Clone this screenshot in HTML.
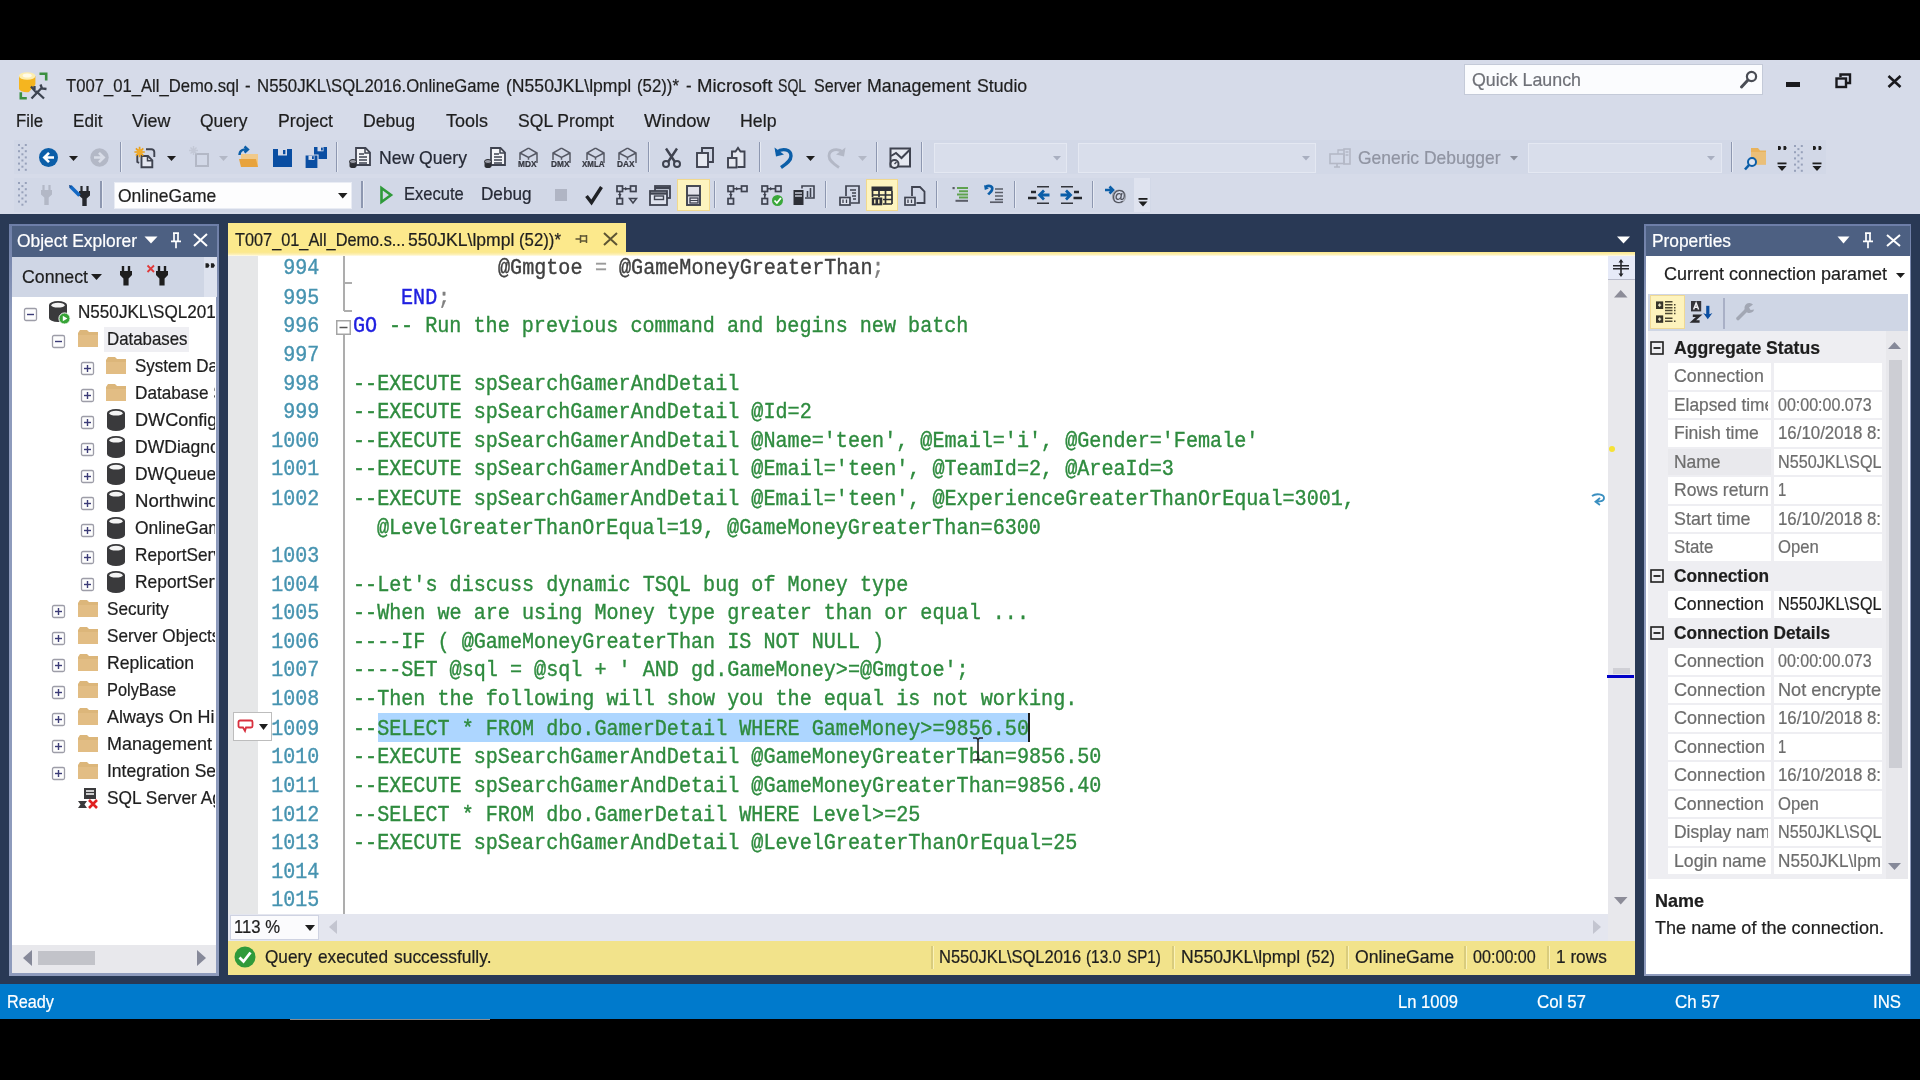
<!DOCTYPE html>
<html lang="en"><head><meta charset="utf-8"><title>SSMS - T007_01_All_Demo.sql</title>
<style>
html,body{margin:0;padding:0;background:#000;}
body{width:1920px;height:1080px;overflow:hidden;font-family:"Liberation Sans",sans-serif;}
#root{position:relative;width:1920px;height:1080px;overflow:hidden;background:#000;}
#root div,#root span.t,#root svg{position:absolute;}
span.t{white-space:pre;line-height:1;transform-origin:0 0;-webkit-text-stroke:0.22px currentColor;}
#root{filter:blur(0.45px);}
svg{overflow:visible;}
</style></head>
<body>
<div id="root">
<div style="left:0px;top:60px;width:1920px;height:154px;background:#d6dbe9;"></div>
<div style="left:0px;top:214px;width:1920px;height:770px;background:#293955;"></div>
<div style="left:0px;top:984px;width:1920px;height:35px;background:#007acc;"></div>
<svg style="left:18.5px;top:71.5px;" width="29" height="28" viewBox="0 0 29 28">
<path d="M0 4 v12.500 a8.200 3.800 0 0 0 16.400 0 v-12.500z" fill="#f5b51f"/>
<ellipse cx="8.200" cy="4" rx="8.200" ry="3.800" fill="#fdeeb0"/><ellipse cx="8.200" cy="3.600" rx="4.500" ry="2" fill="#fffbe9"/>
<path d="M9.500 20.500 L17 12 v9z" fill="#d6dbe9"/>
<path d="M20.500 1.800 h6.700 v6.700" fill="none" stroke="#3b8f40" stroke-width="2.6"/>
<path d="M1.800 20.300 v6 h6" fill="none" stroke="#3b8f40" stroke-width="2.6"/>
<path d="M12.500 26.500 l11 -11.500 M21.500 12.500 l1.500 4 l4.500 0.500 M12 14.500 l3.500 4 l0 -4.500 M17 19 l8 7.500" fill="none" stroke="#3c4350" stroke-width="2.3"/>
</svg>
<span class="t" style="left:66.4px;top:77.34px;font-size:18.5px;color:#1e1e1e;transform:scale(0.8991,1);">T007_01_All_Demo.sql</span>
<span class="t" style="left:245.2px;top:77.34px;font-size:18.5px;color:#1e1e1e;transform:scale(0.9073,1);">-</span>
<span class="t" style="left:256.7px;top:77.34px;font-size:18.5px;color:#1e1e1e;transform:scale(0.9083,1);">N550JKL\</span>
<span class="t" style="left:331.4px;top:77.34px;font-size:18.5px;color:#1e1e1e;transform:scale(0.9018,1);">SQL2016.OnlineGame</span>
<span class="t" style="left:505.8px;top:77.34px;font-size:18.5px;color:#1e1e1e;transform:scale(0.9512,1);">(N550JKL\lpmpl</span>
<span class="t" style="left:637.2px;top:77.34px;font-size:18.5px;color:#1e1e1e;transform:scale(0.9078,1);">(52))*</span>
<span class="t" style="left:685.8px;top:77.34px;font-size:18.5px;color:#1e1e1e;transform:scale(0.9073,1);">-</span>
<span class="t" style="left:696.8px;top:77.34px;font-size:18.5px;color:#1e1e1e;transform:scale(1.0047,1);">Microsoft</span>
<span class="t" style="left:778.4px;top:77.34px;font-size:18.5px;color:#1e1e1e;transform:scale(0.7615,1);">SQL</span>
<span class="t" style="left:813.6px;top:77.34px;font-size:18.5px;color:#1e1e1e;transform:scale(0.8697,1);">Server</span>
<span class="t" style="left:866.6px;top:77.34px;font-size:18.5px;color:#1e1e1e;transform:scale(0.9613,1);">Management</span>
<span class="t" style="left:976.8px;top:77.34px;font-size:18.5px;color:#1e1e1e;transform:scale(0.9568,1);">Studio</span>
<div style="left:1464px;top:64px;width:299px;height:31px;background:#fbfcfe;border:1px solid #c4cad8;box-sizing:border-box;"></div>
<span class="t" style="left:1472px;top:71.34px;font-size:18.5px;color:#6f7178;transform:scale(0.9635,1);">Quick Launch</span>
<svg style="left:1738px;top:69px;" width="22" height="22" viewBox="0 0 22 22"><circle cx="13.5" cy="7.5" r="4.6" fill="none" stroke="#4a4d55" stroke-width="2.2"/><path d="M10 11 L3.5 18" stroke="#4a4d55" stroke-width="3" stroke-linecap="round"/></svg>
<div style="left:1786px;top:82px;width:14px;height:5px;background:#1a1a1e;"></div>
<svg style="left:1835px;top:73px;" width="17" height="16" viewBox="0 0 17 16"><path d="M5.5 4 v-2.5 h9.5 v8.5 h-3" fill="none" stroke="#1a1a1e" stroke-width="2.4"/><rect x="1.5" y="5.5" width="9.5" height="8.5" fill="none" stroke="#1a1a1e" stroke-width="2.4"/></svg>
<svg style="left:1887px;top:75px;" width="15" height="13" viewBox="0 0 15 13"><path d="M1.5 1 L13.5 12 M13.5 1 L1.5 12" stroke="#1a1a1e" stroke-width="2.6" fill="none"/></svg>
<span class="t" style="left:15.5px;top:111.89px;font-size:18.2px;color:#1e1e1e;transform:scale(0.9211,1);">File</span>
<span class="t" style="left:72.5px;top:111.89px;font-size:18.2px;color:#1e1e1e;transform:scale(0.9412,1);">Edit</span>
<span class="t" style="left:131.5px;top:111.89px;font-size:18.2px;color:#1e1e1e;transform:scale(0.9848,1);">View</span>
<span class="t" style="left:199.5px;top:111.89px;font-size:18.2px;color:#1e1e1e;transform:scale(0.9590,1);">Query</span>
<span class="t" style="left:277.5px;top:111.89px;font-size:18.2px;color:#1e1e1e;transform:scale(0.9716,1);">Project</span>
<span class="t" style="left:363px;top:111.89px;font-size:18.2px;color:#1e1e1e;transform:scale(0.9700,1);">Debug</span>
<span class="t" style="left:445.5px;top:111.89px;font-size:18.2px;color:#1e1e1e;transform:scale(0.9890,1);">Tools</span>
<span class="t" style="left:517.5px;top:111.89px;font-size:18.2px;color:#1e1e1e;transform:scale(0.9657,1);">SQL Prompt</span>
<span class="t" style="left:643.5px;top:111.89px;font-size:18.2px;color:#1e1e1e;transform:scale(1.0203,1);">Window</span>
<span class="t" style="left:740px;top:111.89px;font-size:18.2px;color:#1e1e1e;transform:scale(0.9758,1);">Help</span>
<div style="left:14px;top:140px;width:1812px;height:34px;background:#d2d8e7;"></div>
<div style="left:14px;top:178px;width:1137px;height:34px;background:#d2d8e7;"></div>
<svg style="left:17.5px;top:143.8px;" width="9" height="25" viewBox="0 0 9 25"><g fill="#97a1ba"><rect x="0" y="0.0" width="2" height="2"/><rect x="6.8" y="0.0" width="2" height="2"/><rect x="3.4" y="3.1" width="2" height="2"/><rect x="0" y="6.2" width="2" height="2"/><rect x="6.8" y="6.2" width="2" height="2"/><rect x="3.4" y="9.3" width="2" height="2"/><rect x="0" y="12.4" width="2" height="2"/><rect x="6.8" y="12.4" width="2" height="2"/><rect x="3.4" y="15.5" width="2" height="2"/><rect x="0" y="18.6" width="2" height="2"/><rect x="6.8" y="18.6" width="2" height="2"/><rect x="3.4" y="21.7" width="2" height="2"/><rect x="0" y="24.8" width="2" height="2"/><rect x="6.8" y="24.8" width="2" height="2"/></g></svg>
<svg style="left:38.5px;top:148px;" width="19" height="19" viewBox="0 0 19 19"><circle cx="9.5" cy="9.5" r="9.5" fill="#0b5ea8"/><path d="M15 9.5 h-9 M10 4.8 l-4.7 4.7 l4.7 4.7" fill="none" stroke="#fff" stroke-width="2.6"/></svg>
<svg style="left:69.0px;top:155.5px;" width="9" height="5" viewBox="0 0 9 5"><path d="M0 0 h9 l-4.5 5z" fill="#1e1e1e"/></svg>
<svg style="left:89.5px;top:148px;" width="19" height="19" viewBox="0 0 19 19"><circle cx="9.5" cy="9.5" r="9.2" fill="#b3b8c6"/><path d="M4 9.5 h9 M9 4.8 l4.7 4.7 l-4.7 4.7" fill="none" stroke="#d9dde8" stroke-width="2.6"/></svg>
<div style="left:119.5px;top:142px;width:1.6px;height:30px;background:#8d97b0;"></div>
<div style="left:121.1px;top:142px;width:1.2px;height:30px;background:#e6eaf3;"></div>
<svg style="left:134px;top:146px;" width="21" height="22" viewBox="0 0 21 22"><path d="M12 3.200 h5.500 a2.800 2.800 0 0 1 2.800 2.800 v5" fill="none" stroke="#3f4350" stroke-width="1.9"/>
<path d="M7.500 10 h6.500 l4.300 4.300 v7 h-10.800 z" fill="#e4e7f0" stroke="#3f4350" stroke-width="1.9"/><path d="M13.500 10 v4.800 h4.800" fill="none" stroke="#3f4350" stroke-width="1.5"/>
<path d="M3.300 9 v7 l1.800 0.800" fill="none" stroke="#3f4350" stroke-width="1.9"/>
<g stroke="#e9a01c" stroke-width="1.7"><path d="M5.600 0.800 v10.400 M0.400 6 h10.400 M1.900 2.300 l7.400 7.400 M9.300 2.300 l-7.400 7.400"/></g><circle cx="5.600" cy="6" r="3" fill="#f0ab2c"/></svg>
<svg style="left:166.5px;top:155.5px;" width="9" height="5" viewBox="0 0 9 5"><path d="M0 0 h9 l-4.5 5z" fill="#1e1e1e"/></svg>
<svg style="left:189px;top:146px;" width="20" height="22" viewBox="0 0 20 22"><path d="M7 8 h12 v12 h-12 z" fill="none" stroke="#b3b8c6" stroke-width="2"/><path d="M4.5 0 v9 M0 4.5 h9 M1.5 1.5 l6 6 M7.500 1.5 l-6 6" stroke="#c3c8d6" stroke-width="1.4"/></svg>
<svg style="left:218.5px;top:155.5px;" width="9" height="5" viewBox="0 0 9 5"><path d="M0 0 h9 l-4.5 5z" fill="#b3b8c6"/></svg>
<svg style="left:237px;top:146px;" width="23" height="22" viewBox="0 0 23 22"><path d="M4 8 h17 v13 h-17z" fill="#f0c98a"/><path d="M2 13 h17 l2 8 h-17z" fill="#e8a33d"/>
<path d="M2.5 9 c0 -5 4 -6 8 -5.5 M7.5 0.5 l3.400 3 l-3.400 3" fill="none" stroke="#0b5ea8" stroke-width="2.4"/></svg>
<svg style="left:272.5px;top:148.5px;" width="19" height="18" viewBox="0 0 19 18"><path d="M0 0 h19 v18 h-19z" fill="#0a4ea2"/><rect x="5" y="0" width="9" height="6.5" fill="#d6dbe9"/><rect x="10" y="1" width="2.4" height="4.2" fill="#0a4ea2"/></svg>
<svg style="left:304.5px;top:146.5px;" width="22" height="22" viewBox="0 0 22 22"><path d="M9 0 h13 v12 h-13z" fill="#0a4ea2"/><rect x="12.5" y="0" width="6" height="4.3" fill="#d6dbe9"/><rect x="16" y="0.6" width="1.8" height="2.8" fill="#0a4ea2"/><path d="M0 8 h13 v13.500 h-13z" fill="#0a4ea2" stroke="#d2d8e7" stroke-width="1.2"/><rect x="3.5" y="8.600" width="6" height="4.3" fill="#d6dbe9"/><rect x="7" y="9.2" width="1.8" height="2.8" fill="#0a4ea2"/></svg>
<div style="left:335.5px;top:142px;width:1.6px;height:30px;background:#8d97b0;"></div>
<div style="left:337.1px;top:142px;width:1.2px;height:30px;background:#e6eaf3;"></div>
<svg style="left:349px;top:146.5px;" width="22" height="22" viewBox="0 0 22 22"><path d="M7 1 h9.500 l4.500 4.500 v12.500 h-14z" fill="#f3f4f8" stroke="#3f4350" stroke-width="1.8"/><path d="M16 1 v5 h5" fill="none" stroke="#3f4350" stroke-width="1.5"/>
<path d="M10 7 h5 M10 10 h8 M10 13 h8 M10 16 h8" stroke="#3f4350" stroke-width="1.5"/>
<path d="M0.5 14.500 v4.500 a3.500 2 0 0 0 7 0 v-4.500z" fill="#2b2d33"/><ellipse cx="4" cy="14.500" rx="3.500" ry="2" fill="#9a9ca6" stroke="#2b2d33" stroke-width="1"/></svg>
<span class="t" style="left:378.8px;top:149.29px;font-size:18.2px;color:#262a36;transform:scale(0.9674,1);">New Query</span>
<svg style="left:484px;top:146.5px;" width="22" height="22" viewBox="0 0 22 22"><path d="M7 1 h9.500 l4.500 4.500 v12.500 h-14z" fill="#f3f4f8" stroke="#3f4350" stroke-width="1.8"/><path d="M16 1 v5 h5" fill="none" stroke="#3f4350" stroke-width="1.5"/>
<path d="M10 7 h5 M10 10 h8 M10 13 h8 M10 16 h8" stroke="#3f4350" stroke-width="1.5"/>
<path d="M0.5 14.500 v4.500 a3.500 2 0 0 0 7 0 v-4.500z" fill="#2b2d33"/><ellipse cx="4" cy="14.500" rx="3.500" ry="2" fill="#9a9ca6" stroke="#2b2d33" stroke-width="1"/></svg>
<svg style="left:517px;top:146.5px;" width="22" height="22" viewBox="0 0 22 22"><path d="M11.500 1.200 l8.500 4.800 v10 M11.500 1.200 l-8.500 4.800 v7 M3 6 l8.500 4.500 l8.500 -4.500 M11.500 10.500 v2.200" fill="none" stroke="#555864" stroke-width="1.5"/></svg>
<span class="t" style="left:517.75px;top:160.45px;font-size:8.8px;color:#34363f;font-weight:bold;transform:scale(0.9457,1);">MDX</span>
<svg style="left:550px;top:146.5px;" width="22" height="22" viewBox="0 0 22 22"><path d="M11.500 1.200 l8.500 4.800 v10 M11.500 1.200 l-8.500 4.800 v7 M3 6 l8.500 4.500 l8.500 -4.500 M11.500 10.500 v2.200" fill="none" stroke="#555864" stroke-width="1.5"/></svg>
<span class="t" style="left:550.75px;top:160.45px;font-size:8.8px;color:#34363f;font-weight:bold;transform:scale(0.9457,1);">DMX</span>
<svg style="left:583.5px;top:146.5px;" width="22" height="22" viewBox="0 0 22 22"><path d="M11.500 1.200 l8.500 4.800 v10 M11.500 1.200 l-8.500 4.800 v7 M3 6 l8.500 4.500 l8.500 -4.500 M11.500 10.500 v2.200" fill="none" stroke="#555864" stroke-width="1.5"/></svg>
<span class="t" style="left:582.25px;top:160.45px;font-size:8.8px;color:#34363f;font-weight:bold;transform:scale(0.9028,1);">XMLA</span>
<svg style="left:616px;top:146.5px;" width="22" height="22" viewBox="0 0 22 22"><path d="M11.500 1.200 l8.500 4.800 v10 M11.500 1.200 l-8.500 4.800 v7 M3 6 l8.500 4.500 l8.500 -4.500 M11.500 10.500 v2.200" fill="none" stroke="#555864" stroke-width="1.5"/></svg>
<span class="t" style="left:617.25px;top:160.45px;font-size:8.8px;color:#34363f;font-weight:bold;transform:scale(0.9420,1);">DAX</span>
<div style="left:647.5px;top:142px;width:1.6px;height:30px;background:#8d97b0;"></div>
<div style="left:649.1px;top:142px;width:1.2px;height:30px;background:#e6eaf3;"></div>
<svg style="left:662px;top:148px;" width="19" height="20" viewBox="0 0 19 20"><path d="M4 0.5 L13 14 M15 0.5 L6 14" fill="none" stroke="#3f4350" stroke-width="2.4"/><circle cx="4" cy="16" r="3" fill="none" stroke="#3f4350" stroke-width="2"/><circle cx="15" cy="16" r="3" fill="none" stroke="#3f4350" stroke-width="2"/></svg>
<svg style="left:696px;top:147px;" width="18" height="21" viewBox="0 0 18 21"><path d="M6 5 v-4 h11 v14 h-4" fill="none" stroke="#3f4350" stroke-width="1.9"/><rect x="1" y="6" width="11" height="14" fill="#e6e9f1" stroke="#3f4350" stroke-width="1.9"/></svg>
<svg style="left:727px;top:146.5px;" width="19" height="21" viewBox="0 0 19 21"><path d="M5 10 v-5.500 h3.500 l2.500 -3.500 l2.500 3.500 h4 v15.500 h-7" fill="#e6e9f1" stroke="#3f4350" stroke-width="1.9"/><rect x="1" y="11" width="8.500" height="9.500" fill="#e6e9f1" stroke="#3f4350" stroke-width="1.9"/></svg>
<div style="left:758.6px;top:142px;width:1.6px;height:30px;background:#8d97b0;"></div>
<div style="left:760.2px;top:142px;width:1.2px;height:30px;background:#e6eaf3;"></div>
<svg style="left:774px;top:146.5px;" width="19" height="21" viewBox="0 0 19 21"><path d="M2.500 5.500 c6 -5 14.500 -3 14.500 3.500 c0 5 -5 8 -10 11.500" fill="none" stroke="#0b5ea8" stroke-width="3.4"/><path d="M0.5 0.5 l1.500 9 l8 -2z" fill="#0b5ea8"/></svg>
<svg style="left:805.5px;top:155.5px;" width="9" height="5" viewBox="0 0 9 5"><path d="M0 0 h9 l-4.5 5z" fill="#1e1e1e"/></svg>
<svg style="left:827px;top:146.5px;" width="19" height="21" viewBox="0 0 19 21"><path d="M16.500 5.500 c-6 -5 -14.500 -3 -14.500 3.500 c0 5 5 8 10 11.500" fill="none" stroke="#b3b8c6" stroke-width="2.8"/><path d="M18.500 0.5 l-1.500 9 l-8 -2z" fill="#b3b8c6"/></svg>
<svg style="left:858.0px;top:155.5px;" width="9" height="5" viewBox="0 0 9 5"><path d="M0 0 h9 l-4.5 5z" fill="#b3b8c6"/></svg>
<div style="left:875.5px;top:142px;width:1.6px;height:30px;background:#8d97b0;"></div>
<div style="left:877.1px;top:142px;width:1.2px;height:30px;background:#e6eaf3;"></div>
<svg style="left:889px;top:146.5px;" width="22" height="22" viewBox="0 0 22 22"><rect x="1.500" y="1.500" width="19.500" height="18" fill="#e6e9f1" stroke="#3f4350" stroke-width="2"/><path d="M2 9 l5 -3 l5.500 5 l8.500 -8.500" fill="none" stroke="#3f4350" stroke-width="2"/><circle cx="5.500" cy="17" r="4" fill="#e6e9f1" stroke="#3f4350" stroke-width="2"/><path d="M5.500 17 l2 -2" stroke="#3f4350" stroke-width="1.4"/></svg>
<div style="left:920.6px;top:142px;width:1.6px;height:30px;background:#8d97b0;"></div>
<div style="left:922.2px;top:142px;width:1.2px;height:30px;background:#e6eaf3;"></div>
<div style="left:934px;top:142.5px;width:133px;height:30.5px;background:#d9deeb;border:1px solid #e4e8f2;box-sizing:border-box;"></div>
<svg style="left:1052.5px;top:155.75px;" width="8" height="4.5" viewBox="0 0 8 4.5"><path d="M0 0 h8 l-4.0 4.5z" fill="#a9afc0"/></svg>
<div style="left:1078px;top:142.5px;width:238px;height:30.5px;background:#d9deeb;border:1px solid #e4e8f2;box-sizing:border-box;"></div>
<svg style="left:1301.5px;top:155.75px;" width="8" height="4.5" viewBox="0 0 8 4.5"><path d="M0 0 h8 l-4.0 4.5z" fill="#a9afc0"/></svg>
<svg style="left:1329px;top:147.5px;" width="22" height="20" viewBox="0 0 22 20"><rect x="1" y="6" width="14" height="9.500" fill="none" stroke="#b4b8c6" stroke-width="1.6"/><path d="M5 19 h6 M8 15.500 v3.500" stroke="#b4b8c6" stroke-width="1.6"/><rect x="15" y="1" width="6" height="15" fill="none" stroke="#b4b8c6" stroke-width="1.6"/><path d="M9 6 v-4 h6 M16.500 4 h3 M16.500 7 h3" fill="none" stroke="#b4b8c6" stroke-width="1.3"/></svg>
<span class="t" style="left:1357.5px;top:148.59px;font-size:18.2px;color:#9094a2;transform:scale(0.9588,1);">Generic Debugger</span>
<svg style="left:1509.5px;top:155.75px;" width="8" height="4.5" viewBox="0 0 8 4.5"><path d="M0 0 h8 l-4.0 4.5z" fill="#8b909d"/></svg>
<div style="left:1528px;top:142.5px;width:193.5px;height:30.5px;background:#d9deeb;border:1px solid #e4e8f2;box-sizing:border-box;"></div>
<svg style="left:1707.0px;top:155.75px;" width="8" height="4.5" viewBox="0 0 8 4.5"><path d="M0 0 h8 l-4.0 4.5z" fill="#a9afc0"/></svg>
<div style="left:1730.5px;top:142px;width:1.6px;height:30px;background:#8d97b0;"></div>
<div style="left:1732.1px;top:142px;width:1.2px;height:30px;background:#e6eaf3;"></div>
<svg style="left:1744px;top:147px;" width="23" height="23" viewBox="0 0 23 23"><path d="M7 1 h7 l2 2.500 h6 v14 h-15z" fill="#e9b35c"/><path d="M7 5 h15 v12.500 h-15z" fill="#eabf78"/><circle cx="8" cy="15" r="4" fill="#dfe6f2" stroke="#0b5ea8" stroke-width="2"/><path d="M5 18 l-4 4.500" stroke="#0b5ea8" stroke-width="2.6"/></svg>
<svg style="left:1776.5px;top:145px;" width="10" height="27" viewBox="0 0 10 27"><path d="M1 1 h2.200 l1 2 l-1 2 h-2.200z M6.500 1 h2.200 l1 2 l-1 2 h-2.200z" fill="#1e1e1e"/><rect x="0.5" y="17.500" width="9" height="1.800" fill="#1e1e1e"/><path d="M0.5 21 h9 l-4.500 5z" fill="#1e1e1e"/></svg>
<svg style="left:1793.8px;top:144.5px;" width="9" height="25" viewBox="0 0 9 25"><g fill="#97a1ba"><rect x="0" y="0.0" width="2" height="2"/><rect x="6.8" y="0.0" width="2" height="2"/><rect x="3.4" y="3.1" width="2" height="2"/><rect x="0" y="6.2" width="2" height="2"/><rect x="6.8" y="6.2" width="2" height="2"/><rect x="3.4" y="9.3" width="2" height="2"/><rect x="0" y="12.4" width="2" height="2"/><rect x="6.8" y="12.4" width="2" height="2"/><rect x="3.4" y="15.5" width="2" height="2"/><rect x="0" y="18.6" width="2" height="2"/><rect x="6.8" y="18.6" width="2" height="2"/><rect x="3.4" y="21.7" width="2" height="2"/><rect x="0" y="24.8" width="2" height="2"/><rect x="6.8" y="24.8" width="2" height="2"/></g></svg>
<svg style="left:1811.5px;top:145px;" width="10" height="27" viewBox="0 0 10 27"><path d="M1 1 h2.200 l1 2 l-1 2 h-2.200z M6.500 1 h2.200 l1 2 l-1 2 h-2.200z" fill="#1e1e1e"/><rect x="0.5" y="17.500" width="9" height="1.800" fill="#1e1e1e"/><path d="M0.5 21 h9 l-4.500 5z" fill="#1e1e1e"/></svg>
<svg style="left:17.5px;top:182.2px;" width="9" height="22" viewBox="0 0 9 22"><g fill="#97a1ba"><rect x="0" y="0.0" width="2" height="2"/><rect x="6.8" y="0.0" width="2" height="2"/><rect x="3.4" y="3.1" width="2" height="2"/><rect x="0" y="6.2" width="2" height="2"/><rect x="6.8" y="6.2" width="2" height="2"/><rect x="3.4" y="9.3" width="2" height="2"/><rect x="0" y="12.4" width="2" height="2"/><rect x="6.8" y="12.4" width="2" height="2"/><rect x="3.4" y="15.5" width="2" height="2"/><rect x="0" y="18.6" width="2" height="2"/><rect x="6.8" y="18.6" width="2" height="2"/><rect x="3.4" y="21.7" width="2" height="2"/></g></svg>
<svg style="left:41px;top:185px;" width="11" height="20" viewBox="0 0 11 20"><path d="M2.500 0 v5 M8.500 0 v5" stroke="#b3b8c6" stroke-width="2.2" fill="none"/><path d="M0 5 h11 v4.500 l-3.300 3 v7.500 h-4.400 v-7.500 l-3.300 -3z" fill="#b3b8c6"/></svg>
<svg style="left:79px;top:185.5px;" width="11" height="20" viewBox="0 0 11 20"><path d="M2.500 0 v5 M8.500 0 v5" stroke="#26282e" stroke-width="2.2" fill="none"/><path d="M0 5 h11 v4.500 l-3.300 3 v7.500 h-4.400 v-7.500 l-3.300 -3z" fill="#26282e"/></svg>
<svg style="left:68.5px;top:184.5px;" width="12" height="12" viewBox="0 0 12 12"><path d="M1.500 1.500 L10.500 10.500" stroke="#1368c4" stroke-width="3.6"/><path d="M0 0 l3 0.7 l-2.300 2.300z" fill="#0a3f86"/></svg>
<div style="left:100px;top:181px;width:1.6px;height:27px;background:#8d97b0;"></div>
<div style="left:101.6px;top:181px;width:1.2px;height:27px;background:#e6eaf3;"></div>
<div style="left:113.5px;top:181.5px;width:238px;height:27.5px;background:#fdfdfe;border:1px solid #e9ecf4;box-sizing:border-box;"></div>
<span class="t" style="left:117.8px;top:186.79px;font-size:18.2px;color:#1e1e1e;transform:scale(0.9617,1);">OnlineGame</span>
<svg style="left:337.55px;top:193.25px;" width="9.5" height="5.5" viewBox="0 0 9.5 5.5"><path d="M0 0 h9.5 l-4.75 5.5z" fill="#1e1e1e"/></svg>
<div style="left:361px;top:181px;width:1.6px;height:27px;background:#8d97b0;"></div>
<div style="left:362.6px;top:181px;width:1.2px;height:27px;background:#e6eaf3;"></div>
<svg style="left:379.5px;top:186px;" width="12" height="18" viewBox="0 0 12 18"><path d="M1.500 2 v14 l9.500 -7z" fill="none" stroke="#2f9a3a" stroke-width="2.6" stroke-linejoin="miter"/></svg>
<span class="t" style="left:404.2px;top:185.39px;font-size:18.2px;color:#262a36;transform:scale(0.9099,1);">Execute</span>
<span class="t" style="left:481px;top:185.39px;font-size:18.2px;color:#262a36;transform:scale(0.9420,1);">Debug</span>
<div style="left:555px;top:189px;width:12px;height:11.5px;background:#b0b5c4;"></div>
<svg style="left:585px;top:186px;" width="18" height="18" viewBox="0 0 18 18"><path d="M1.500 10 l5 6.500 l10 -15.500" fill="none" stroke="#202226" stroke-width="3.4"/></svg>
<svg style="left:616px;top:185px;" width="22" height="20" viewBox="0 0 22 20"><rect x="1" y="1" width="5.500" height="5.500" fill="none" stroke="#3f4350" stroke-width="1.7"/><rect x="14.500" y="1" width="5.500" height="5.500" fill="none" stroke="#3f4350" stroke-width="1.7"/><rect x="1" y="13.500" width="5.500" height="5.500" fill="none" stroke="#3f4350" stroke-width="1.7"/><path d="M7 3.800 h7 M3.800 7 v6" stroke="#3f4350" stroke-width="1.5"/><path d="M9 2 l3 1.800 l-3 1.800z M2 9 l1.800 3 l1.800 -3z" fill="#3f4350"/><path d="M13.500 13.500 h7 l-3.500 4.500z" fill="none" stroke="#3f4350" stroke-width="1.5"/></svg>
<svg style="left:649px;top:185px;" width="22" height="21" viewBox="0 0 22 21"><rect x="6" y="1" width="15" height="12" fill="none" stroke="#3f4350" stroke-width="1.8"/><path d="M6 3 h15" stroke="#3f4350" stroke-width="2.400"/><rect x="1" y="6" width="17" height="14" fill="#dfe3ee" stroke="#3f4350" stroke-width="1.8"/><path d="M1 8.500 h17" stroke="#3f4350" stroke-width="2.400"/><rect x="5.500" y="11" width="9" height="3.500" fill="none" stroke="#3f4350" stroke-width="1.4"/></svg>
<div style="left:677px;top:178.5px;width:32.5px;height:32.5px;background:#fdf4bf;border:1.5px solid #f1d98e;box-sizing:border-box;"></div>
<svg style="left:686px;top:185px;" width="15" height="21" viewBox="0 0 15 21"><rect x="1" y="1" width="13" height="19" fill="#e3e3ea" stroke="#3f4350" stroke-width="1.9"/><path d="M1 10.500 h13" stroke="#3f4350" stroke-width="1.8"/><rect x="4" y="13" width="8" height="5" fill="none" stroke="#3f4350" stroke-width="1.3"/><path d="M4 15.500 h8" stroke="#3f4350" stroke-width="1"/></svg>
<div style="left:713.6px;top:181px;width:1.6px;height:27px;background:#8d97b0;"></div>
<div style="left:715.2px;top:181px;width:1.2px;height:27px;background:#e6eaf3;"></div>
<svg style="left:727.2px;top:185px;" width="22" height="20" viewBox="0 0 22 20"><rect x="1" y="1" width="5.500" height="5.500" fill="none" stroke="#3f4350" stroke-width="1.7"/><rect x="14.500" y="1" width="5.500" height="5.500" fill="none" stroke="#3f4350" stroke-width="1.7"/><rect x="1" y="13.500" width="5.500" height="5.500" fill="none" stroke="#3f4350" stroke-width="1.7"/><path d="M7 3.800 h7 M3.800 7 v6" stroke="#3f4350" stroke-width="1.5"/><path d="M9 2 l3 1.800 l-3 1.800z M2 9 l1.800 3 l1.800 -3z" fill="#3f4350"/></svg>
<svg style="left:760.6px;top:185px;" width="22" height="20" viewBox="0 0 22 20"><rect x="1" y="1" width="5.500" height="5.500" fill="none" stroke="#3f4350" stroke-width="1.7"/><rect x="14.500" y="1" width="5.500" height="5.500" fill="none" stroke="#3f4350" stroke-width="1.7"/><rect x="1" y="13.500" width="5.500" height="5.500" fill="none" stroke="#3f4350" stroke-width="1.7"/><path d="M7 3.800 h7 M3.800 7 v6" stroke="#3f4350" stroke-width="1.5"/><path d="M9 2 l3 1.800 l-3 1.800z M2 9 l1.800 3 l1.800 -3z" fill="#3f4350"/><circle cx="16.500" cy="15.500" r="5.500" fill="#3aa83a"/><path d="M13.500 15.500 l2.400 2.500 l4 -5" fill="none" stroke="#fff" stroke-width="1.8"/></svg>
<svg style="left:793px;top:185px;" width="22" height="20" viewBox="0 0 22 20"><rect x="0.5" y="5" width="10" height="15" fill="#2d2f36"/><path d="M2 8 h7 M2 11 h7" stroke="#c8ccd8" stroke-width="1.3"/><path d="M9 3.500 v-2.500 h12 v12 h-9" fill="none" stroke="#3f4350" stroke-width="1.6"/><path d="M14.500 12 v-6 M17.500 12 v-9" stroke="#3f4350" stroke-width="1.6"/></svg>
<div style="left:824.6px;top:181px;width:1.6px;height:27px;background:#8d97b0;"></div>
<div style="left:826.2px;top:181px;width:1.2px;height:27px;background:#e6eaf3;"></div>
<svg style="left:838.5px;top:185px;" width="22" height="21" viewBox="0 0 22 21"><path d="M7 11 v-10 h13 v17 h-8" fill="none" stroke="#3f4350" stroke-width="1.7"/><path d="M11 5 h6 M13 8 h4 M13 11 h4 M14 14 h3" stroke="#3f4350" stroke-width="1.3"/><rect x="1" y="12.5" width="10" height="7.500" fill="#dfe3ee" stroke="#3f4350" stroke-width="1.7"/><path d="M4 14.5 v3.500 M7.5 14.5 v3.500" stroke="#3f4350" stroke-width="1.3"/></svg>
<div style="left:865.6px;top:178.5px;width:32.39999999999998px;height:32.5px;background:#fdf4bf;border:1.5px solid #f1d98e;box-sizing:border-box;"></div>
<svg style="left:871px;top:186px;" width="22" height="20" viewBox="0 0 22 20"><rect x="0.5" y="0.5" width="21" height="4.500" fill="#2d2f36"/><path d="M1.500 5 v6 M8 5 v6 M14.500 5 v13 M21 5 v13 M1 9 h20 M12 13.500 h9 M12 18 h9" fill="none" stroke="#2d2f36" stroke-width="1.7"/><rect x="0.8" y="11.500" width="10.500" height="7.800" fill="#2d2f36"/><path d="M3.800 13.500 v4 M7.800 13.500 v4" stroke="#fdf4bf" stroke-width="1.4"/></svg>
<svg style="left:904px;top:185px;" width="22" height="21" viewBox="0 0 22 21"><path d="M8 11 v-9 h8 l4.500 4.500 v11.500 h-8" fill="none" stroke="#3f4350" stroke-width="1.8"/><rect x="1" y="12.5" width="10" height="7.500" fill="#dfe3ee" stroke="#3f4350" stroke-width="1.7"/><path d="M4 14.5 v3.500 M7.5 14.5 v3.500" stroke="#3f4350" stroke-width="1.3"/></svg>
<div style="left:935.5px;top:181px;width:1.6px;height:27px;background:#8d97b0;"></div>
<div style="left:937.1px;top:181px;width:1.2px;height:27px;background:#e6eaf3;"></div>
<svg style="left:952px;top:186px;" width="16" height="16" viewBox="0 0 16 16"><rect x="0.5" y="1" width="2.200" height="2.200" fill="#5a5d68"/><path d="M5 2 h11 M7 5.200 h9 M5 8.400 h11 M7 11.600 h9" stroke="#5fa24f" stroke-width="2"/><path d="M3.500 14.800 h12.500" stroke="#5a5d68" stroke-width="2"/></svg>
<svg style="left:983.5px;top:185px;" width="19" height="18" viewBox="0 0 19 18"><path d="M1.200 2 c4.500 -2.500 8 -0.500 6.800 3 c-0.600 1.800 -2.500 3 -3.800 4.500" fill="none" stroke="#0b5ea8" stroke-width="2.6"/><path d="M0 0 l0.800 5 l4 -1.500z" fill="#0b5ea8"/><path d="M11 4 h8 M11 7.500 h8 M11 11 h8 M11 14.500 h8" stroke="#5a5d68" stroke-width="1.7"/><path d="M6 17.200 h13" stroke="#5a5d68" stroke-width="1.7"/></svg>
<div style="left:1013.6px;top:181px;width:1.6px;height:27px;background:#8d97b0;"></div>
<div style="left:1015.2px;top:181px;width:1.2px;height:27px;background:#e6eaf3;"></div>
<svg style="left:1027.5px;top:186px;" width="22" height="18" viewBox="0 0 22 18"><path d="M9 0.8 h12 M9 17.200 h12" stroke="#33353c" stroke-width="1.5"/><path d="M3 6 h5 M0 12 h8.500" stroke="#26282e" stroke-width="2.600"/><path d="M21.500 9 h-9 M16 4.500 l-4.500 4.500 l4.500 4.500" fill="none" stroke="#0b5ea8" stroke-width="2.800"/></svg>
<svg style="left:1060px;top:186px;" width="22" height="18" viewBox="0 0 22 18"><path d="M1 0.8 h12 M1 17.200 h12" stroke="#33353c" stroke-width="1.5"/><path d="M14 6 h5 M13.500 12 h8.500" stroke="#26282e" stroke-width="2.600"/><path d="M0.5 9 h9 M6 4.500 l4.500 4.500 l-4.500 4.500" fill="none" stroke="#0b5ea8" stroke-width="2.800"/></svg>
<div style="left:1091.5px;top:181px;width:1.6px;height:27px;background:#8d97b0;"></div>
<div style="left:1093.1px;top:181px;width:1.2px;height:27px;background:#e6eaf3;"></div>
<svg style="left:1105px;top:186px;" width="22" height="18" viewBox="0 0 22 18"><path d="M0 4 h7 M4.500 0.5 l3.500 3.500 l-3.500 3.500" fill="none" stroke="#0b5ea8" stroke-width="2.600"/><circle cx="14" cy="10.500" r="6.500" fill="none" stroke="#9b9ea8" stroke-width="1.2"/></svg>
<span class="t" style="left:1112px;top:187.80px;font-size:15px;color:#4a4d57;transform:scale(0.9190,1);">@</span>
<div style="left:1134px;top:178px;width:16px;height:34px;background:#dfe3ef;"></div>
<svg style="left:1138px;top:198px;" width="10" height="9" viewBox="0 0 10 9"><rect x="0.5" y="0" width="9" height="1.800" fill="#1e1e1e"/><path d="M0.500 3.500 h9 l-4.500 5z" fill="#1e1e1e"/></svg>
<div style="left:9.2px;top:223.5px;width:210px;height:752px;background:linear-gradient(#6d7ea8,#7a89ae 5%,#8e9bbc 12%);"></div>
<div style="left:11.5px;top:225.5px;width:205.5px;height:31px;background:#4d6082;"></div>
<span class="t" style="left:17px;top:231.59px;font-size:18.2px;color:#ffffff;transform:scale(0.9574,1);">Object Explorer</span>
<svg style="left:144px;top:236px;" width="14" height="8" viewBox="0 0 14 8"><path d="M0.5 0.5 h13 l-6.5 7z" fill="#ffffff"/></svg>
<svg style="left:170px;top:232px;" width="12" height="17" viewBox="0 0 12 17"><path d="M3 1.2 h6 M4 1.2 v8 M8 1.2 v8 M1 9.3 h10 M6 9.3 v7" fill="none" stroke="#ffffff" stroke-width="1.7"/></svg>
<svg style="left:193px;top:233px;" width="15" height="14" viewBox="0 0 15 14"><path d="M1 1 L14 13 M14 1 L1 13" stroke="#ffffff" stroke-width="2" fill="none"/></svg>
<div style="left:11.8px;top:256.5px;width:204.7px;height:40px;background:#cfd6e5;"></div>
<div style="left:203.5px;top:256.5px;width:13px;height:40px;background:#dde2ee;"></div>
<span class="t" style="left:22px;top:267.59px;font-size:18.2px;color:#1e1e1e;transform:scale(0.9742,1);">Connect</span>
<svg style="left:91px;top:274px;" width="11" height="6" viewBox="0 0 11 6"><path d="M0 0 h11 l-5.5 6z" fill="#1e1e1e"/></svg>
<svg style="left:120px;top:266px;" width="12" height="21" viewBox="0 0 12 21"><path d="M3 0 v5 M9 0 v5" stroke="#1e1e1e" stroke-width="2.4" fill="none"/><path d="M0 5 h12 v4 l-3.4 3.4 v7 h-5.2 v-7 l-3.4 -3.4z" fill="#1e1e1e"/></svg>
<svg style="left:156px;top:266px;" width="12" height="21" viewBox="0 0 12 21"><path d="M3 0 v5 M9 0 v5" stroke="#1e1e1e" stroke-width="2.4" fill="none"/><path d="M0 5 h12 v4 l-3.4 3.4 v7 h-5.2 v-7 l-3.4 -3.4z" fill="#1e1e1e"/></svg>
<svg style="left:147px;top:265px;" width="8" height="8" viewBox="0 0 8 8"><path d="M0.5 0.5 L7 7 M7 0.5 L0.5 7" stroke="#e03a3a" stroke-width="1.8" fill="none"/></svg>
<svg style="left:205px;top:263.2px;transform:scale(0.9);" width="10" height="6" viewBox="0 0 10 6"><path d="M0 0 h3 l1.5 2.5 l-1.5 2.5 h-3z M6 0 h3 l1.5 2.5 l-1.5 2.5 h-3z" fill="#1e1e1e"/></svg>
<div style="left:11.8px;top:296.5px;width:204.7px;height:649px;background:#ffffff;"></div>
<div style="left:11.8px;top:945px;width:204.7px;height:27.5px;background:#e8e8ec;"></div>
<svg style="left:23px;top:950px;" width="9" height="16" viewBox="0 0 9 16"><path d="M9 0 v16 l-9 -8z" fill="#868999"/></svg>
<svg style="left:197px;top:950px;" width="9" height="16" viewBox="0 0 9 16"><path d="M0 0 v16 l9 -8z" fill="#868999"/></svg>
<div style="left:38px;top:951px;width:57px;height:14px;background:#c2c3c9;"></div>
<div style="left:0;top:296px;width:215px;height:649px;overflow:hidden;"><div style="left:0;top:-296px;width:400px;height:1080px;">
<div style="left:103.5px;top:326.5px;width:85.5px;height:25.5px;background:#efeff3;"></div>
<svg style="left:23.8px;top:307.7px;" width="13" height="13" viewBox="0 0 13 13"><rect x="0.5" y="0.5" width="12" height="12" fill="#fdfdfd" stroke="#9d9da8" stroke-width="1.3" rx="1.5"/><path d="M3 6.5 h7" stroke="#3c3c78" stroke-width="1.4"/></svg>
<svg style="left:48.6px;top:301px;" width="22" height="24" viewBox="0 0 22 24"><path d="M0 4 v13 a9 4 0 0 0 18 0 v-13z" fill="#3a3a3c"/><ellipse cx="9" cy="4" rx="9" ry="4" fill="#3a3a3c"/><ellipse cx="9" cy="4.2" rx="6.6" ry="2.4" fill="#f4f4f4"/><circle cx="15.5" cy="17.5" r="5.6" fill="#37a437" stroke="#fff" stroke-width="1"/><path d="M13.8 14.8 v5.4 l4.6 -2.7z" fill="#fff"/></svg>
<span class="t" style="left:78px;top:303.49px;font-size:18.2px;color:#1e1e1e;transform:scale(0.9402,1);">N550JKL\SQL2016 (SQL Server 13.0.4001 - N550JKL\lpmpl)</span>
<svg style="left:51.8px;top:334.7px;" width="13" height="13" viewBox="0 0 13 13"><rect x="0.5" y="0.5" width="12" height="12" fill="#fdfdfd" stroke="#9d9da8" stroke-width="1.3" rx="1.5"/><path d="M3 6.5 h7" stroke="#3c3c78" stroke-width="1.4"/></svg>
<svg style="left:77.6px;top:330px;" width="20" height="17" viewBox="0 0 20 17"><path d="M0 3 l2 -3 h7 l2 2 h9 v15 h-20z" fill="#dcb67a"/><path d="M0 5 h20 v12 h-20z" fill="#e2bd84"/></svg>
<span class="t" style="left:106.5px;top:330.49px;font-size:18.2px;color:#1e1e1e;transform:scale(0.9254,1);">Databases</span>
<svg style="left:80.8px;top:361.7px;" width="13" height="13" viewBox="0 0 13 13"><rect x="0.5" y="0.5" width="12" height="12" fill="#fdfdfd" stroke="#9d9da8" stroke-width="1.3" rx="1.5"/><path d="M3 6.5 h7" stroke="#3c3c78" stroke-width="1.4"/><path d="M6.5 3 v7" stroke="#3c3c78" stroke-width="1.4"/></svg>
<svg style="left:105.6px;top:357px;" width="20" height="17" viewBox="0 0 20 17"><path d="M0 3 l2 -3 h7 l2 2 h9 v15 h-20z" fill="#dcb67a"/><path d="M0 5 h20 v12 h-20z" fill="#e2bd84"/></svg>
<span class="t" style="left:135px;top:357.49px;font-size:18.2px;color:#1e1e1e;transform:scale(0.9324,1);">System Databases</span>
<svg style="left:80.8px;top:388.7px;" width="13" height="13" viewBox="0 0 13 13"><rect x="0.5" y="0.5" width="12" height="12" fill="#fdfdfd" stroke="#9d9da8" stroke-width="1.3" rx="1.5"/><path d="M3 6.5 h7" stroke="#3c3c78" stroke-width="1.4"/><path d="M6.5 3 v7" stroke="#3c3c78" stroke-width="1.4"/></svg>
<svg style="left:105.6px;top:384px;" width="20" height="17" viewBox="0 0 20 17"><path d="M0 3 l2 -3 h7 l2 2 h9 v15 h-20z" fill="#dcb67a"/><path d="M0 5 h20 v12 h-20z" fill="#e2bd84"/></svg>
<span class="t" style="left:135px;top:384.49px;font-size:18.2px;color:#1e1e1e;transform:scale(0.9438,1);">Database Snapshots</span>
<svg style="left:80.8px;top:415.7px;" width="13" height="13" viewBox="0 0 13 13"><rect x="0.5" y="0.5" width="12" height="12" fill="#fdfdfd" stroke="#9d9da8" stroke-width="1.3" rx="1.5"/><path d="M3 6.5 h7" stroke="#3c3c78" stroke-width="1.4"/><path d="M6.5 3 v7" stroke="#3c3c78" stroke-width="1.4"/></svg>
<svg style="left:106.6px;top:409px;" width="18" height="22" viewBox="0 0 18 22"><path d="M0 4 v14 a9 4 0 0 0 18 0 v-14z" fill="#3a3a3c"/><ellipse cx="9" cy="4" rx="9" ry="4" fill="#3a3a3c"/><ellipse cx="9" cy="4.2" rx="6.6" ry="2.4" fill="#f4f4f4"/></svg>
<span class="t" style="left:135px;top:411.49px;font-size:18.2px;color:#1e1e1e;transform:scale(0.9944,1);">DWConfiguration</span>
<svg style="left:80.8px;top:442.7px;" width="13" height="13" viewBox="0 0 13 13"><rect x="0.5" y="0.5" width="12" height="12" fill="#fdfdfd" stroke="#9d9da8" stroke-width="1.3" rx="1.5"/><path d="M3 6.5 h7" stroke="#3c3c78" stroke-width="1.4"/><path d="M6.5 3 v7" stroke="#3c3c78" stroke-width="1.4"/></svg>
<svg style="left:106.6px;top:436px;" width="18" height="22" viewBox="0 0 18 22"><path d="M0 4 v14 a9 4 0 0 0 18 0 v-14z" fill="#3a3a3c"/><ellipse cx="9" cy="4" rx="9" ry="4" fill="#3a3a3c"/><ellipse cx="9" cy="4.2" rx="6.6" ry="2.4" fill="#f4f4f4"/></svg>
<span class="t" style="left:135px;top:438.49px;font-size:18.2px;color:#1e1e1e;transform:scale(0.9648,1);">DWDiagnostics</span>
<svg style="left:80.8px;top:469.7px;" width="13" height="13" viewBox="0 0 13 13"><rect x="0.5" y="0.5" width="12" height="12" fill="#fdfdfd" stroke="#9d9da8" stroke-width="1.3" rx="1.5"/><path d="M3 6.5 h7" stroke="#3c3c78" stroke-width="1.4"/><path d="M6.5 3 v7" stroke="#3c3c78" stroke-width="1.4"/></svg>
<svg style="left:106.6px;top:463px;" width="18" height="22" viewBox="0 0 18 22"><path d="M0 4 v14 a9 4 0 0 0 18 0 v-14z" fill="#3a3a3c"/><ellipse cx="9" cy="4" rx="9" ry="4" fill="#3a3a3c"/><ellipse cx="9" cy="4.2" rx="6.6" ry="2.4" fill="#f4f4f4"/></svg>
<span class="t" style="left:135px;top:465.49px;font-size:18.2px;color:#1e1e1e;transform:scale(0.9562,1);">DWQueue</span>
<svg style="left:80.8px;top:496.7px;" width="13" height="13" viewBox="0 0 13 13"><rect x="0.5" y="0.5" width="12" height="12" fill="#fdfdfd" stroke="#9d9da8" stroke-width="1.3" rx="1.5"/><path d="M3 6.5 h7" stroke="#3c3c78" stroke-width="1.4"/><path d="M6.5 3 v7" stroke="#3c3c78" stroke-width="1.4"/></svg>
<svg style="left:106.6px;top:490px;" width="18" height="22" viewBox="0 0 18 22"><path d="M0 4 v14 a9 4 0 0 0 18 0 v-14z" fill="#3a3a3c"/><ellipse cx="9" cy="4" rx="9" ry="4" fill="#3a3a3c"/><ellipse cx="9" cy="4.2" rx="6.6" ry="2.4" fill="#f4f4f4"/></svg>
<span class="t" style="left:135px;top:492.49px;font-size:18.2px;color:#1e1e1e;transform:scale(1.0224,1);">Northwind</span>
<svg style="left:80.8px;top:523.7px;" width="13" height="13" viewBox="0 0 13 13"><rect x="0.5" y="0.5" width="12" height="12" fill="#fdfdfd" stroke="#9d9da8" stroke-width="1.3" rx="1.5"/><path d="M3 6.5 h7" stroke="#3c3c78" stroke-width="1.4"/><path d="M6.5 3 v7" stroke="#3c3c78" stroke-width="1.4"/></svg>
<svg style="left:106.6px;top:517px;" width="18" height="22" viewBox="0 0 18 22"><path d="M0 4 v14 a9 4 0 0 0 18 0 v-14z" fill="#3a3a3c"/><ellipse cx="9" cy="4" rx="9" ry="4" fill="#3a3a3c"/><ellipse cx="9" cy="4.2" rx="6.6" ry="2.4" fill="#f4f4f4"/></svg>
<span class="t" style="left:135px;top:519.49px;font-size:18.2px;color:#1e1e1e;transform:scale(0.9548,1);">OnlineGame</span>
<svg style="left:80.8px;top:550.7px;" width="13" height="13" viewBox="0 0 13 13"><rect x="0.5" y="0.5" width="12" height="12" fill="#fdfdfd" stroke="#9d9da8" stroke-width="1.3" rx="1.5"/><path d="M3 6.5 h7" stroke="#3c3c78" stroke-width="1.4"/><path d="M6.5 3 v7" stroke="#3c3c78" stroke-width="1.4"/></svg>
<svg style="left:106.6px;top:544px;" width="18" height="22" viewBox="0 0 18 22"><path d="M0 4 v14 a9 4 0 0 0 18 0 v-14z" fill="#3a3a3c"/><ellipse cx="9" cy="4" rx="9" ry="4" fill="#3a3a3c"/><ellipse cx="9" cy="4.2" rx="6.6" ry="2.4" fill="#f4f4f4"/></svg>
<span class="t" style="left:135px;top:546.49px;font-size:18.2px;color:#1e1e1e;transform:scale(0.9449,1);">ReportServer</span>
<svg style="left:80.8px;top:577.7px;" width="13" height="13" viewBox="0 0 13 13"><rect x="0.5" y="0.5" width="12" height="12" fill="#fdfdfd" stroke="#9d9da8" stroke-width="1.3" rx="1.5"/><path d="M3 6.5 h7" stroke="#3c3c78" stroke-width="1.4"/><path d="M6.5 3 v7" stroke="#3c3c78" stroke-width="1.4"/></svg>
<svg style="left:106.6px;top:571px;" width="18" height="22" viewBox="0 0 18 22"><path d="M0 4 v14 a9 4 0 0 0 18 0 v-14z" fill="#3a3a3c"/><ellipse cx="9" cy="4" rx="9" ry="4" fill="#3a3a3c"/><ellipse cx="9" cy="4.2" rx="6.6" ry="2.4" fill="#f4f4f4"/></svg>
<span class="t" style="left:135px;top:573.49px;font-size:18.2px;color:#1e1e1e;transform:scale(0.9560,1);">ReportServerTempDB</span>
<svg style="left:51.8px;top:604.7px;" width="13" height="13" viewBox="0 0 13 13"><rect x="0.5" y="0.5" width="12" height="12" fill="#fdfdfd" stroke="#9d9da8" stroke-width="1.3" rx="1.5"/><path d="M3 6.5 h7" stroke="#3c3c78" stroke-width="1.4"/><path d="M6.5 3 v7" stroke="#3c3c78" stroke-width="1.4"/></svg>
<svg style="left:77.6px;top:600px;" width="20" height="17" viewBox="0 0 20 17"><path d="M0 3 l2 -3 h7 l2 2 h9 v15 h-20z" fill="#dcb67a"/><path d="M0 5 h20 v12 h-20z" fill="#e2bd84"/></svg>
<span class="t" style="left:106.5px;top:600.49px;font-size:18.2px;color:#1e1e1e;transform:scale(0.9423,1);">Security</span>
<svg style="left:51.8px;top:631.7px;" width="13" height="13" viewBox="0 0 13 13"><rect x="0.5" y="0.5" width="12" height="12" fill="#fdfdfd" stroke="#9d9da8" stroke-width="1.3" rx="1.5"/><path d="M3 6.5 h7" stroke="#3c3c78" stroke-width="1.4"/><path d="M6.5 3 v7" stroke="#3c3c78" stroke-width="1.4"/></svg>
<svg style="left:77.6px;top:627px;" width="20" height="17" viewBox="0 0 20 17"><path d="M0 3 l2 -3 h7 l2 2 h9 v15 h-20z" fill="#dcb67a"/><path d="M0 5 h20 v12 h-20z" fill="#e2bd84"/></svg>
<span class="t" style="left:106.5px;top:627.49px;font-size:18.2px;color:#1e1e1e;transform:scale(0.9432,1);">Server Objects</span>
<svg style="left:51.8px;top:658.7px;" width="13" height="13" viewBox="0 0 13 13"><rect x="0.5" y="0.5" width="12" height="12" fill="#fdfdfd" stroke="#9d9da8" stroke-width="1.3" rx="1.5"/><path d="M3 6.5 h7" stroke="#3c3c78" stroke-width="1.4"/><path d="M6.5 3 v7" stroke="#3c3c78" stroke-width="1.4"/></svg>
<svg style="left:77.6px;top:654px;" width="20" height="17" viewBox="0 0 20 17"><path d="M0 3 l2 -3 h7 l2 2 h9 v15 h-20z" fill="#dcb67a"/><path d="M0 5 h20 v12 h-20z" fill="#e2bd84"/></svg>
<span class="t" style="left:106.5px;top:654.49px;font-size:18.2px;color:#1e1e1e;transform:scale(0.9685,1);">Replication</span>
<svg style="left:51.8px;top:685.7px;" width="13" height="13" viewBox="0 0 13 13"><rect x="0.5" y="0.5" width="12" height="12" fill="#fdfdfd" stroke="#9d9da8" stroke-width="1.3" rx="1.5"/><path d="M3 6.5 h7" stroke="#3c3c78" stroke-width="1.4"/><path d="M6.5 3 v7" stroke="#3c3c78" stroke-width="1.4"/></svg>
<svg style="left:77.6px;top:681px;" width="20" height="17" viewBox="0 0 20 17"><path d="M0 3 l2 -3 h7 l2 2 h9 v15 h-20z" fill="#dcb67a"/><path d="M0 5 h20 v12 h-20z" fill="#e2bd84"/></svg>
<span class="t" style="left:106.5px;top:681.49px;font-size:18.2px;color:#1e1e1e;transform:scale(0.9008,1);">PolyBase</span>
<svg style="left:51.8px;top:712.7px;" width="13" height="13" viewBox="0 0 13 13"><rect x="0.5" y="0.5" width="12" height="12" fill="#fdfdfd" stroke="#9d9da8" stroke-width="1.3" rx="1.5"/><path d="M3 6.5 h7" stroke="#3c3c78" stroke-width="1.4"/><path d="M6.5 3 v7" stroke="#3c3c78" stroke-width="1.4"/></svg>
<svg style="left:77.6px;top:708px;" width="20" height="17" viewBox="0 0 20 17"><path d="M0 3 l2 -3 h7 l2 2 h9 v15 h-20z" fill="#dcb67a"/><path d="M0 5 h20 v12 h-20z" fill="#e2bd84"/></svg>
<span class="t" style="left:106.5px;top:708.49px;font-size:18.2px;color:#1e1e1e;transform:scale(0.9848,1);">Always On High Availability</span>
<svg style="left:51.8px;top:739.7px;" width="13" height="13" viewBox="0 0 13 13"><rect x="0.5" y="0.5" width="12" height="12" fill="#fdfdfd" stroke="#9d9da8" stroke-width="1.3" rx="1.5"/><path d="M3 6.5 h7" stroke="#3c3c78" stroke-width="1.4"/><path d="M6.5 3 v7" stroke="#3c3c78" stroke-width="1.4"/></svg>
<svg style="left:77.6px;top:735px;" width="20" height="17" viewBox="0 0 20 17"><path d="M0 3 l2 -3 h7 l2 2 h9 v15 h-20z" fill="#dcb67a"/><path d="M0 5 h20 v12 h-20z" fill="#e2bd84"/></svg>
<span class="t" style="left:106.5px;top:735.49px;font-size:18.2px;color:#1e1e1e;transform:scale(0.9880,1);">Management</span>
<svg style="left:51.8px;top:766.7px;" width="13" height="13" viewBox="0 0 13 13"><rect x="0.5" y="0.5" width="12" height="12" fill="#fdfdfd" stroke="#9d9da8" stroke-width="1.3" rx="1.5"/><path d="M3 6.5 h7" stroke="#3c3c78" stroke-width="1.4"/><path d="M6.5 3 v7" stroke="#3c3c78" stroke-width="1.4"/></svg>
<svg style="left:77.6px;top:762px;" width="20" height="17" viewBox="0 0 20 17"><path d="M0 3 l2 -3 h7 l2 2 h9 v15 h-20z" fill="#dcb67a"/><path d="M0 5 h20 v12 h-20z" fill="#e2bd84"/></svg>
<span class="t" style="left:106.5px;top:762.49px;font-size:18.2px;color:#1e1e1e;transform:scale(0.9633,1);">Integration Services Catalogs</span>
<svg style="left:76.6px;top:788px;" width="22" height="21" viewBox="0 0 22 21"><rect x="7" y="0" width="12" height="11" fill="#3a3a3c"/><path d="M9 3 h8 M9 6 h8" stroke="#fff" stroke-width="1.3"/><path d="M1 13 h9 l-2.5 3.5 l2.5 3.5 h-9 l2.5 -3.5z" fill="#3a3a3c"/><path d="M12 12 L20 20 M20 12 L12 20" stroke="#e02020" stroke-width="2.6"/></svg>
<span class="t" style="left:106.5px;top:789.49px;font-size:18.2px;color:#1e1e1e;transform:scale(0.9525,1);">SQL Server Agent (Agent XPs disabled)</span>
</div></div>
<div style="left:228px;top:223px;width:398px;height:32px;background:#fce98c;"></div>
<span class="t" style="left:235px;top:231.39px;font-size:18.2px;color:#1e1e1e;transform:scale(0.8965,1);">T007_01_All_Demo.s...</span>
<span class="t" style="left:407.5px;top:231.39px;font-size:18.2px;color:#1e1e1e;transform:scale(0.9646,1);">550JKL\lpmpl</span>
<span class="t" style="left:519.2px;top:231.39px;font-size:18.2px;color:#1e1e1e;transform:scale(0.9234,1);">(52))*</span>
<svg style="left:575px;top:233px;" width="14" height="12" viewBox="0 0 14 12"><path d="M0.5 6 h5 M5.5 2 v8 M5.5 3 h6 v5 h-6 M11.5 2 v8" fill="none" stroke="#5d5533" stroke-width="1.5"/></svg>
<svg style="left:603px;top:232px;" width="15" height="14" viewBox="0 0 15 14"><path d="M1 1 L14 13 M14 1 L1 13" stroke="#5d5533" stroke-width="2" fill="none"/></svg>
<svg style="left:1617px;top:236px;" width="13" height="8" viewBox="0 0 13 8"><path d="M0 0.5 h13 l-6.5 7z" fill="#ffffff"/></svg>
<div style="left:228px;top:252px;width:1406.5px;height:4px;background:linear-gradient(#fbe78a,#fdf0b4 60%,#fffbea);"></div>
<div style="left:228px;top:256px;width:1406.5px;height:658px;background:#ffffff;"></div>
<div style="left:228px;top:256px;width:30px;height:658px;background:#e6e7e8;"></div>
<div style="left:1608px;top:256px;width:26.5px;height:658px;background:#e8e8ec;"></div>
<div style="left:1608px;top:256px;width:26.5px;height:24px;background:#e6eaf8;border-bottom:1.5px solid #b9bccb;box-sizing:border-box;"></div>
<svg style="left:1612px;top:258px;" width="18" height="20" viewBox="0 0 18 20"><path d="M1 7.800 h16 M1 10.800 h16" fill="none" stroke="#26272c" stroke-width="1.4"/><path d="M9 2 v16" stroke="#26272c" stroke-width="1.6"/><path d="M6.500 4.500 l2.500 -3.500 l2.500 3.500z M6.500 15.500 l2.500 3.500 l2.500 -3.500z" fill="#26272c"/></svg>
<svg style="left:1614px;top:289.5px;" width="13.5" height="7.5" viewBox="0 0 13.5 7.5"><path d="M0 7.500 h13.500 l-6.750 -7.500z" fill="#8c8c98"/></svg>
<svg style="left:1614px;top:897px;" width="13.5" height="7.5" viewBox="0 0 13.5 7.5"><path d="M0 0 h13.500 l-6.750 7.500z" fill="#8c8c98"/></svg>
<div style="left:1608.7px;top:445.5px;width:6.5px;height:6.5px;background:#f6e236;border-radius:3.250px;"></div>
<div style="left:1613px;top:668px;width:17px;height:6px;background:#d0d0d6;"></div>
<div style="left:1607px;top:675px;width:27px;height:3px;background:#0000c8;"></div>
<svg style="left:1590.5px;top:492.5px;" width="16" height="14" viewBox="0 0 16 14"><path d="M1 3 c4 -3 12 -2 12 2 c0 4 -6 3.5 -8 3.5 M9 5 l-4.5 3.7 l4.5 3.3" fill="none" stroke="#3a8fc0" stroke-width="1.8"/></svg>
<div style="left:228px;top:914px;width:1406.5px;height:27px;background:#e4e6ef;"></div>
<div style="left:230px;top:915px;width:89px;height:25px;background:#fbfbfd;border:1px solid #cfd3e2;box-sizing:border-box;"></div>
<span class="t" style="left:234px;top:919.19px;font-size:17.5px;color:#1e1e1e;transform:scale(0.9518,1);">113 %</span>
<svg style="left:305px;top:925px;" width="10" height="6" viewBox="0 0 10 6"><path d="M0 0 h10 l-5 6z" fill="#1e1e1e"/></svg>
<svg style="left:329px;top:920px;" width="8" height="14" viewBox="0 0 8 14"><path d="M8 0 v14 l-8 -7z" fill="#c3c5d0"/></svg>
<svg style="left:1593px;top:920px;" width="8" height="14" viewBox="0 0 8 14"><path d="M0 0 v14 l8 -7z" fill="#c3c5d0"/></svg>
<div style="left:1608px;top:914px;width:26.5px;height:27px;background:#e8e8ec;"></div>
<div style="left:228px;top:941px;width:1406.5px;height:33.5px;background:#f2e38b;"></div>
<svg style="left:234px;top:946px;" width="22" height="22" viewBox="0 0 22 22"><circle cx="11" cy="11" r="10.5" fill="#2f9a3a"/><path d="M5.5 11.5 l4 4 l7 -9" fill="none" stroke="#fff" stroke-width="2.8"/></svg>
<span class="t" style="left:264.5px;top:948.39px;font-size:18.2px;color:#1e1e1e;transform:scale(0.9449,1);">Query</span>
<span class="t" style="left:317.5px;top:948.39px;font-size:18.2px;color:#1e1e1e;transform:scale(0.9481,1);">executed</span>
<span class="t" style="left:393.8px;top:948.39px;font-size:18.2px;color:#1e1e1e;transform:scale(0.9582,1);">successfully.</span>
<div style="left:931px;top:946px;width:2px;height:23px;background:#d9cc7d;"></div>
<div style="left:933px;top:946px;width:1px;height:23px;background:#fbf3b8;"></div>
<div style="left:1172px;top:946px;width:2px;height:23px;background:#d9cc7d;"></div>
<div style="left:1174px;top:946px;width:1px;height:23px;background:#fbf3b8;"></div>
<div style="left:1346px;top:946px;width:2px;height:23px;background:#d9cc7d;"></div>
<div style="left:1348px;top:946px;width:1px;height:23px;background:#fbf3b8;"></div>
<div style="left:1464px;top:946px;width:2px;height:23px;background:#d9cc7d;"></div>
<div style="left:1466px;top:946px;width:1px;height:23px;background:#fbf3b8;"></div>
<div style="left:1547px;top:946px;width:2px;height:23px;background:#d9cc7d;"></div>
<div style="left:1549px;top:946px;width:1px;height:23px;background:#fbf3b8;"></div>
<span class="t" style="left:939px;top:948.39px;font-size:18.2px;color:#1e1e1e;transform:scale(0.9073,1);">N550JKL\SQL2016</span>
<span class="t" style="left:1086px;top:948.39px;font-size:18.2px;color:#1e1e1e;transform:scale(0.8440,1);">(13.0</span>
<span class="t" style="left:1127px;top:948.39px;font-size:18.2px;color:#1e1e1e;transform:scale(0.8359,1);">SP1)</span>
<span class="t" style="left:1180.8px;top:948.39px;font-size:18.2px;color:#1e1e1e;transform:scale(0.9664,1);">N550JKL\lpmpl</span>
<span class="t" style="left:1306px;top:948.39px;font-size:18.2px;color:#1e1e1e;transform:scale(0.8904,1);">(52)</span>
<span class="t" style="left:1355px;top:948.39px;font-size:18.2px;color:#1e1e1e;transform:scale(0.9695,1);">OnlineGame</span>
<span class="t" style="left:1473.2px;top:948.39px;font-size:18.2px;color:#1e1e1e;transform:scale(0.8870,1);">00:00:00</span>
<span class="t" style="left:1556px;top:948.39px;font-size:18.2px;color:#1e1e1e;transform:scale(0.9481,1);">1 rows</span>
<div style="left:377.5px;top:713.3px;width:652px;height:29px;background:#add6ff;"></div>
<div style="left:1028.3px;top:713.3px;width:2px;height:29px;background:#1e1e1e;"></div>
<span class="t" style="left:283.3px;top:257.44px;font-size:20px;color:#4693b0;font-family:'Liberation Mono',monospace;transform:scale(1.0000,1.1);-webkit-text-stroke:0.35px #4693b0;">994</span>
<span class="t" style="left:498.03999999999996px;top:257.44px;font-size:20px;color:#404040;font-family:'Liberation Mono',monospace;transform:scale(1.0058,1.1);-webkit-text-stroke:0.35px #404040;">@Gmgtoe</span>
<span class="t" style="left:594.6px;top:257.44px;font-size:20px;color:#9a9a9a;font-family:'Liberation Mono',monospace;transform:scale(1.0058,1.1);-webkit-text-stroke:0.35px #9a9a9a;">=</span>
<span class="t" style="left:618.74px;top:257.44px;font-size:20px;color:#404040;font-family:'Liberation Mono',monospace;transform:scale(1.0058,1.1);-webkit-text-stroke:0.35px #404040;">@GameMoneyGreaterThan</span>
<span class="t" style="left:872.21px;top:257.44px;font-size:20px;color:#808080;font-family:'Liberation Mono',monospace;transform:scale(1.0058,1.1);-webkit-text-stroke:0.35px #808080;">;</span>
<span class="t" style="left:283.3px;top:286.64px;font-size:20px;color:#4693b0;font-family:'Liberation Mono',monospace;transform:scale(1.0000,1.1);-webkit-text-stroke:0.35px #4693b0;">995</span>
<span class="t" style="left:401.48px;top:286.64px;font-size:20px;color:#2020e0;font-family:'Liberation Mono',monospace;transform:scale(1.0058,1.1);-webkit-text-stroke:0.35px #2020e0;">END</span>
<span class="t" style="left:437.69px;top:286.64px;font-size:20px;color:#808080;font-family:'Liberation Mono',monospace;transform:scale(1.0058,1.1);-webkit-text-stroke:0.35px #808080;">;</span>
<span class="t" style="left:283.3px;top:315.24px;font-size:20px;color:#4693b0;font-family:'Liberation Mono',monospace;transform:scale(1.0000,1.1);-webkit-text-stroke:0.35px #4693b0;">996</span>
<span class="t" style="left:353.2px;top:315.24px;font-size:20px;color:#2020e0;font-family:'Liberation Mono',monospace;transform:scale(1.0058,1.1);-webkit-text-stroke:0.35px #2020e0;">GO</span>
<span class="t" style="left:389.40999999999997px;top:315.24px;font-size:20px;color:#2e8b3e;font-family:'Liberation Mono',monospace;transform:scale(1.0058,1.1);-webkit-text-stroke:0.35px #2e8b3e;">-- Run the previous command and begins new batch</span>
<span class="t" style="left:283.3px;top:343.94px;font-size:20px;color:#4693b0;font-family:'Liberation Mono',monospace;transform:scale(1.0000,1.1);-webkit-text-stroke:0.35px #4693b0;">997</span>
<span class="t" style="left:283.3px;top:372.54px;font-size:20px;color:#4693b0;font-family:'Liberation Mono',monospace;transform:scale(1.0000,1.1);-webkit-text-stroke:0.35px #4693b0;">998</span>
<span class="t" style="left:353.2px;top:372.54px;font-size:20px;color:#2e8b3e;font-family:'Liberation Mono',monospace;transform:scale(1.0058,1.1);-webkit-text-stroke:0.35px #2e8b3e;">--EXECUTE spSearchGamerAndDetail</span>
<span class="t" style="left:283.3px;top:401.04px;font-size:20px;color:#4693b0;font-family:'Liberation Mono',monospace;transform:scale(1.0000,1.1);-webkit-text-stroke:0.35px #4693b0;">999</span>
<span class="t" style="left:353.2px;top:401.04px;font-size:20px;color:#2e8b3e;font-family:'Liberation Mono',monospace;transform:scale(1.0058,1.1);-webkit-text-stroke:0.35px #2e8b3e;">--EXECUTE spSearchGamerAndDetail @Id=2</span>
<span class="t" style="left:271.3px;top:429.84px;font-size:20px;color:#4693b0;font-family:'Liberation Mono',monospace;transform:scale(1.0000,1.1);-webkit-text-stroke:0.35px #4693b0;">1000</span>
<span class="t" style="left:353.2px;top:429.84px;font-size:20px;color:#2e8b3e;font-family:'Liberation Mono',monospace;transform:scale(1.0058,1.1);-webkit-text-stroke:0.35px #2e8b3e;">--EXECUTE spSearchGamerAndDetail @Name=&#x27;teen&#x27;, @Email=&#x27;i&#x27;, @Gender=&#x27;Female&#x27;</span>
<span class="t" style="left:271.3px;top:458.34px;font-size:20px;color:#4693b0;font-family:'Liberation Mono',monospace;transform:scale(1.0000,1.1);-webkit-text-stroke:0.35px #4693b0;">1001</span>
<span class="t" style="left:353.2px;top:458.34px;font-size:20px;color:#2e8b3e;font-family:'Liberation Mono',monospace;transform:scale(1.0058,1.1);-webkit-text-stroke:0.35px #2e8b3e;">--EXECUTE spSearchGamerAndDetail @Email=&#x27;teen&#x27;, @TeamId=2, @AreaId=3</span>
<span class="t" style="left:271.3px;top:488.44px;font-size:20px;color:#4693b0;font-family:'Liberation Mono',monospace;transform:scale(1.0000,1.1);-webkit-text-stroke:0.35px #4693b0;">1002</span>
<span class="t" style="left:353.2px;top:488.44px;font-size:20px;color:#2e8b3e;font-family:'Liberation Mono',monospace;transform:scale(1.0058,1.1);-webkit-text-stroke:0.35px #2e8b3e;">--EXECUTE spSearchGamerAndDetail @Email=&#x27;teen&#x27;, @ExperienceGreaterThanOrEqual=3001,</span>
<span class="t" style="left:377.34px;top:517.04px;font-size:20px;color:#2e8b3e;font-family:'Liberation Mono',monospace;transform:scale(1.0058,1.1);-webkit-text-stroke:0.35px #2e8b3e;">@LevelGreaterThanOrEqual=19, @GameMoneyGreaterThan=6300</span>
<span class="t" style="left:271.3px;top:545.44px;font-size:20px;color:#4693b0;font-family:'Liberation Mono',monospace;transform:scale(1.0000,1.1);-webkit-text-stroke:0.35px #4693b0;">1003</span>
<span class="t" style="left:271.3px;top:573.94px;font-size:20px;color:#4693b0;font-family:'Liberation Mono',monospace;transform:scale(1.0000,1.1);-webkit-text-stroke:0.35px #4693b0;">1004</span>
<span class="t" style="left:353.2px;top:573.94px;font-size:20px;color:#2e8b3e;font-family:'Liberation Mono',monospace;transform:scale(1.0058,1.1);-webkit-text-stroke:0.35px #2e8b3e;">--Let&#x27;s discuss dynamic TSQL bug of Money type</span>
<span class="t" style="left:271.3px;top:602.34px;font-size:20px;color:#4693b0;font-family:'Liberation Mono',monospace;transform:scale(1.0000,1.1);-webkit-text-stroke:0.35px #4693b0;">1005</span>
<span class="t" style="left:353.2px;top:602.34px;font-size:20px;color:#2e8b3e;font-family:'Liberation Mono',monospace;transform:scale(1.0058,1.1);-webkit-text-stroke:0.35px #2e8b3e;">--When we are using Money type greater than or equal ...</span>
<span class="t" style="left:271.3px;top:630.84px;font-size:20px;color:#4693b0;font-family:'Liberation Mono',monospace;transform:scale(1.0000,1.1);-webkit-text-stroke:0.35px #4693b0;">1006</span>
<span class="t" style="left:353.2px;top:630.84px;font-size:20px;color:#2e8b3e;font-family:'Liberation Mono',monospace;transform:scale(1.0058,1.1);-webkit-text-stroke:0.35px #2e8b3e;">----IF ( @GameMoneyGreaterThan IS NOT NULL )</span>
<span class="t" style="left:271.3px;top:659.39px;font-size:20px;color:#4693b0;font-family:'Liberation Mono',monospace;transform:scale(1.0000,1.1);-webkit-text-stroke:0.35px #4693b0;">1007</span>
<span class="t" style="left:353.2px;top:659.39px;font-size:20px;color:#2e8b3e;font-family:'Liberation Mono',monospace;transform:scale(1.0058,1.1);-webkit-text-stroke:0.35px #2e8b3e;">----SET @sql = @sql + &#x27; AND gd.GameMoney&gt;=@Gmgtoe&#x27;;</span>
<span class="t" style="left:271.3px;top:687.74px;font-size:20px;color:#4693b0;font-family:'Liberation Mono',monospace;transform:scale(1.0000,1.1);-webkit-text-stroke:0.35px #4693b0;">1008</span>
<span class="t" style="left:353.2px;top:687.74px;font-size:20px;color:#2e8b3e;font-family:'Liberation Mono',monospace;transform:scale(1.0058,1.1);-webkit-text-stroke:0.35px #2e8b3e;">--Then the following will show you the equal is not working.</span>
<span class="t" style="left:271.3px;top:717.94px;font-size:20px;color:#4693b0;font-family:'Liberation Mono',monospace;transform:scale(1.0000,1.1);-webkit-text-stroke:0.35px #4693b0;">1009</span>
<span class="t" style="left:353.2px;top:717.94px;font-size:20px;color:#2e8b3e;font-family:'Liberation Mono',monospace;transform:scale(1.0058,1.1);-webkit-text-stroke:0.35px #2e8b3e;">--SELECT * FROM dbo.GamerDetail WHERE GameMoney&gt;=9856.50</span>
<span class="t" style="left:271.3px;top:746.44px;font-size:20px;color:#4693b0;font-family:'Liberation Mono',monospace;transform:scale(1.0000,1.1);-webkit-text-stroke:0.35px #4693b0;">1010</span>
<span class="t" style="left:353.2px;top:746.44px;font-size:20px;color:#2e8b3e;font-family:'Liberation Mono',monospace;transform:scale(1.0058,1.1);-webkit-text-stroke:0.35px #2e8b3e;">--EXECUTE spSearchGamerAndDetail @GameMoneyGreaterThan=9856.50</span>
<span class="t" style="left:271.3px;top:775.24px;font-size:20px;color:#4693b0;font-family:'Liberation Mono',monospace;transform:scale(1.0000,1.1);-webkit-text-stroke:0.35px #4693b0;">1011</span>
<span class="t" style="left:353.2px;top:775.24px;font-size:20px;color:#2e8b3e;font-family:'Liberation Mono',monospace;transform:scale(1.0058,1.1);-webkit-text-stroke:0.35px #2e8b3e;">--EXECUTE spSearchGamerAndDetail @GameMoneyGreaterThan=9856.40</span>
<span class="t" style="left:271.3px;top:803.74px;font-size:20px;color:#4693b0;font-family:'Liberation Mono',monospace;transform:scale(1.0000,1.1);-webkit-text-stroke:0.35px #4693b0;">1012</span>
<span class="t" style="left:353.2px;top:803.74px;font-size:20px;color:#2e8b3e;font-family:'Liberation Mono',monospace;transform:scale(1.0058,1.1);-webkit-text-stroke:0.35px #2e8b3e;">--SELECT * FROM dbo.GamerDetail WHERE Level&gt;=25</span>
<span class="t" style="left:271.3px;top:832.14px;font-size:20px;color:#4693b0;font-family:'Liberation Mono',monospace;transform:scale(1.0000,1.1);-webkit-text-stroke:0.35px #4693b0;">1013</span>
<span class="t" style="left:353.2px;top:832.14px;font-size:20px;color:#2e8b3e;font-family:'Liberation Mono',monospace;transform:scale(1.0058,1.1);-webkit-text-stroke:0.35px #2e8b3e;">--EXECUTE spSearchGamerAndDetail @LevelGreaterThanOrEqual=25</span>
<span class="t" style="left:271.3px;top:860.64px;font-size:20px;color:#4693b0;font-family:'Liberation Mono',monospace;transform:scale(1.0000,1.1);-webkit-text-stroke:0.35px #4693b0;">1014</span>
<span class="t" style="left:271.3px;top:888.74px;font-size:20px;color:#4693b0;font-family:'Liberation Mono',monospace;transform:scale(1.0000,1.1);-webkit-text-stroke:0.35px #4693b0;">1015</span>
<div style="left:343.2px;top:256px;width:2px;height:50px;background:#adadad;"></div>
<div style="left:343.5px;top:282px;width:8px;height:1.5px;background:#adadad;"></div>
<div style="left:343.5px;top:310px;width:8px;height:1.5px;background:#adadad;"></div>
<div style="left:343.2px;top:282px;width:2px;height:29px;background:#adadad;"></div>
<div style="left:343.2px;top:335px;width:2px;height:579px;background:#adadad;"></div>
<svg style="left:336px;top:320px;" width="15" height="15" viewBox="0 0 15 15"><rect x="0.75" y="0.75" width="13.5" height="13.5" fill="#fff" stroke="#a5a5a5" stroke-width="1.5"/><path d="M3.5 7.5 h8" stroke="#555" stroke-width="1.5"/></svg>
<div style="left:233px;top:712px;width:38.5px;height:29px;background:#ffffff;border:1px solid #bdbdbd;box-sizing:border-box;"></div>
<svg style="left:237.5px;top:718.5px;" width="16" height="14" viewBox="0 0 16 14"><path d="M2 1.5 h11 a1.5 1.5 0 0 1 1.5 1.5 v4 a1.5 1.5 0 0 1 -1.5 1.5 h-5 l-1 3.5 l-2 -3.5 h-3 a1.5 1.5 0 0 1 -1.5 -1.5 v-4 a1.5 1.5 0 0 1 1.5 -1.5z" fill="none" stroke="#d8303e" stroke-width="1.8"/></svg>
<svg style="left:259px;top:723.5px;" width="9" height="6" viewBox="0 0 9 6"><path d="M0 0 h9 l-4.5 6z" fill="#1e1e1e"/></svg>
<svg style="left:972px;top:737px;" width="12" height="24" viewBox="0 0 12 24"><path d="M1 1 h3.5 l1.5 1.5 l1.5 -1.5 h3.5 M6 2.5 v19 M1 23 h3.5 l1.5 -1.5 l1.5 1.5 h3.5" fill="none" stroke="#222" stroke-width="1.6"/></svg>
<div style="left:1644.2px;top:223.5px;width:267px;height:752px;background:linear-gradient(#6d7ea8,#7a89ae 5%,#8e9bbc 12%);"></div>
<div style="left:1646px;top:225.5px;width:263.5px;height:31px;background:#4d6082;"></div>
<span class="t" style="left:1652px;top:231.89px;font-size:18.2px;color:#ffffff;transform:scale(0.9529,1);">Properties</span>
<svg style="left:1837px;top:236px;" width="13" height="8" viewBox="0 0 13 8"><path d="M0.5 0.5 h12 l-6 7z" fill="#ffffff"/></svg>
<svg style="left:1862px;top:232px;" width="12" height="17" viewBox="0 0 12 17"><path d="M3 1.2 h6 M4 1.2 v8 M8 1.2 v8 M1 9.3 h10 M6 9.3 v7" fill="none" stroke="#ffffff" stroke-width="1.7"/></svg>
<svg style="left:1886px;top:233.5px;" width="15" height="13" viewBox="0 0 15 13"><path d="M1 1 L14 12 M14 1 L1 12" stroke="#ffffff" stroke-width="2" fill="none"/></svg>
<div style="left:1646px;top:256px;width:264px;height:718px;background:#ffffff;"></div>
<span class="t" style="left:1664px;top:265.09px;font-size:18.2px;color:#1e1e1e;transform:scale(0.9891,1);">Current connection paramet</span>
<svg style="left:1896px;top:273px;" width="9" height="5" viewBox="0 0 9 5"><path d="M0 0 h9 l-4.5 5z" fill="#1e1e1e"/></svg>
<div style="left:1648px;top:294px;width:260px;height:37px;background:#cfd6e5;"></div>
<div style="left:1649.5px;top:295.3px;width:35px;height:33.3px;background:#fdf3bd;border:1.5px solid #efd994;box-sizing:border-box;"></div>
<svg style="left:1656px;top:301px;" width="22" height="22" viewBox="0 0 22 22"><rect x="0" y="0.400" width="7.200" height="7.600" fill="#36342a"/><rect x="0" y="14.400" width="7.200" height="7.400" fill="#36342a"/>
<path d="M2 4.200 h3.200 M3.600 2.600 v3.200 M2 18.100 h3.200 M3.600 16.500 v3.200" stroke="#e9e3c4" stroke-width="1.3"/>
<path d="M9 0.800 h7.500 M9 3.800 h7.500 M9 6.800 h7.500 M9 9.600 h7.500 M9 12.400 h7.500 M9 17.200 h7.500 M9 20.200 h7.500" stroke="#4d4833" stroke-width="1.5"/>
<path d="M18 3.800 h2.600 M18 6.800 h2.600 M18 9.600 h2.600 M18 12.400 h2.600 M18 20.200 h2.600" stroke="#4d4833" stroke-width="1.5" stroke-dasharray="1.5 1.1"/></svg>
<svg style="left:1690.5px;top:301.3px;" width="22" height="22" viewBox="0 0 22 22"><rect x="0" y="0" width="10.200" height="10.400" fill="#34343a"/><path d="M2.600 8.600 l2.500 -6.600 l2.500 6.600 M3.600 6.300 h3" fill="none" stroke="#f0f0f4" stroke-width="1.5"/>
<path d="M1.800 14.800 h6.400 l-6.400 5.800 h6.800" fill="none" stroke="#2a2a2e" stroke-width="2.500"/>
<path d="M16.800 4.800 v11" stroke="#0b4ea0" stroke-width="3.200"/><path d="M12.200 12 l4.600 6.200 l4.600 -6.200 q-4.600 2.500 -9.200 0z" fill="#0b4ea0"/></svg>
<div style="left:1723.2px;top:297.6px;width:2px;height:31px;background:#a9b0c6;"></div>
<svg style="left:1736px;top:302px;" width="19" height="19" viewBox="0 0 19 19"><path d="M2 16.5 L10 8.5" stroke="#a2a7b4" stroke-width="3.6" stroke-linecap="round"/><path d="M17 2.5 a5 5 0 1 0 1.2 5 l-3.6 0.5 l-1.6 -2.4z" fill="#a2a7b4"/></svg>
<div style="left:1648px;top:331px;width:260px;height:548px;background:#eeeef2;"></div>
<svg style="left:1650px;top:340.5px;" width="14" height="14" viewBox="0 0 14 14"><rect x="1" y="1" width="12" height="12" fill="none" stroke="#1e1e1e" stroke-width="1.6"/><path d="M3.5 7 h7" stroke="#1e1e1e" stroke-width="1.8"/></svg>
<span class="t" style="left:1674px;top:338.69px;font-size:18.2px;color:#1e1e1e;font-weight:bold;transform:scale(0.9695,1);">Aggregate Status</span>
<div style="left:1668px;top:363px;width:103px;height:26.5px;background:#ffffff;"></div>
<div style="left:1773.5px;top:363px;width:108.5px;height:26.5px;background:#ffffff;"></div>
<div style="left:1668px;top:362px;width:99.5px;height:28px;overflow:hidden;">
<span class="t" style="left:6px;top:5.49px;font-size:18.2px;color:#6d6d6d;transform:scale(0.9758,1);">Connection failures</span>
</div>
<div style="left:1773.5px;top:362px;width:108.5px;height:28px;overflow:hidden;">
<span class="t" style="left:4.5px;top:5.49px;font-size:18.2px;color:#6d6d6d;"></span>
</div>
<div style="left:1668px;top:391.5px;width:103px;height:26.5px;background:#ffffff;"></div>
<div style="left:1773.5px;top:391.5px;width:108.5px;height:26.5px;background:#ffffff;"></div>
<div style="left:1668px;top:390.5px;width:99.5px;height:28px;overflow:hidden;">
<span class="t" style="left:6px;top:5.49px;font-size:18.2px;color:#6d6d6d;transform:scale(0.9526,1);">Elapsed time</span>
</div>
<div style="left:1773.5px;top:390.5px;width:108.5px;height:28px;overflow:hidden;">
<span class="t" style="left:4.5px;top:5.49px;font-size:18.2px;color:#6d6d6d;transform:scale(0.8811,1);">00:00:00.073</span>
</div>
<div style="left:1668px;top:420px;width:103px;height:26.5px;background:#ffffff;"></div>
<div style="left:1773.5px;top:420px;width:108.5px;height:26.5px;background:#ffffff;"></div>
<div style="left:1668px;top:419px;width:99.5px;height:28px;overflow:hidden;">
<span class="t" style="left:6px;top:5.49px;font-size:18.2px;color:#6d6d6d;transform:scale(0.9644,1);">Finish time</span>
</div>
<div style="left:1773.5px;top:419px;width:108.5px;height:28px;overflow:hidden;">
<span class="t" style="left:4.5px;top:5.49px;font-size:18.2px;color:#6d6d6d;transform:scale(0.9258,1);">16/10/2018 8:</span>
</div>
<div style="left:1668px;top:448.5px;width:103px;height:26.5px;background:#e9e9ed;"></div>
<div style="left:1773.5px;top:448.5px;width:108.5px;height:26.5px;background:#ffffff;"></div>
<div style="left:1668px;top:447.5px;width:99.5px;height:28px;overflow:hidden;">
<span class="t" style="left:6px;top:5.49px;font-size:18.2px;color:#6d6d6d;transform:scale(0.9592,1);">Name</span>
</div>
<div style="left:1773.5px;top:447.5px;width:108.5px;height:28px;overflow:hidden;">
<span class="t" style="left:4.5px;top:5.49px;font-size:18.2px;color:#6d6d6d;transform:scale(0.8902,1);">N550JKL\SQL</span>
</div>
<div style="left:1668px;top:477px;width:103px;height:26.5px;background:#ffffff;"></div>
<div style="left:1773.5px;top:477px;width:108.5px;height:26.5px;background:#ffffff;"></div>
<div style="left:1668px;top:476px;width:99.5px;height:28px;overflow:hidden;">
<span class="t" style="left:6px;top:5.49px;font-size:18.2px;color:#6d6d6d;transform:scale(0.9666,1);">Rows returned</span>
</div>
<div style="left:1773.5px;top:476px;width:108.5px;height:28px;overflow:hidden;">
<span class="t" style="left:4.5px;top:5.49px;font-size:18.2px;color:#6d6d6d;transform:scale(0.8163,1);">1</span>
</div>
<div style="left:1668px;top:505.5px;width:103px;height:26.5px;background:#ffffff;"></div>
<div style="left:1773.5px;top:505.5px;width:108.5px;height:26.5px;background:#ffffff;"></div>
<div style="left:1668px;top:504.5px;width:99.5px;height:28px;overflow:hidden;">
<span class="t" style="left:6px;top:5.49px;font-size:18.2px;color:#6d6d6d;transform:scale(0.9828,1);">Start time</span>
</div>
<div style="left:1773.5px;top:504.5px;width:108.5px;height:28px;overflow:hidden;">
<span class="t" style="left:4.5px;top:5.49px;font-size:18.2px;color:#6d6d6d;transform:scale(0.9258,1);">16/10/2018 8:</span>
</div>
<div style="left:1668px;top:534px;width:103px;height:26.5px;background:#ffffff;"></div>
<div style="left:1773.5px;top:534px;width:108.5px;height:26.5px;background:#ffffff;"></div>
<div style="left:1668px;top:533px;width:99.5px;height:28px;overflow:hidden;">
<span class="t" style="left:6px;top:5.49px;font-size:18.2px;color:#6d6d6d;transform:scale(0.9263,1);">State</span>
</div>
<div style="left:1773.5px;top:533px;width:108.5px;height:28px;overflow:hidden;">
<span class="t" style="left:4.5px;top:5.49px;font-size:18.2px;color:#6d6d6d;transform:scale(0.9166,1);">Open</span>
</div>
<svg style="left:1650px;top:568.5px;" width="14" height="14" viewBox="0 0 14 14"><rect x="1" y="1" width="12" height="12" fill="none" stroke="#1e1e1e" stroke-width="1.6"/><path d="M3.5 7 h7" stroke="#1e1e1e" stroke-width="1.8"/></svg>
<span class="t" style="left:1674px;top:566.69px;font-size:18.2px;color:#1e1e1e;font-weight:bold;transform:scale(0.9497,1);">Connection</span>
<div style="left:1668px;top:591px;width:103px;height:26.5px;background:#ffffff;"></div>
<div style="left:1773.5px;top:591px;width:108.5px;height:26.5px;background:#ffffff;"></div>
<div style="left:1668px;top:590px;width:99.5px;height:28px;overflow:hidden;">
<span class="t" style="left:6px;top:5.49px;font-size:18.2px;color:#1e1e1e;transform:scale(0.9763,1);">Connection name</span>
</div>
<div style="left:1773.5px;top:590px;width:108.5px;height:28px;overflow:hidden;">
<span class="t" style="left:4.5px;top:5.49px;font-size:18.2px;color:#1e1e1e;transform:scale(0.8902,1);">N550JKL\SQL</span>
</div>
<svg style="left:1650px;top:625.5px;" width="14" height="14" viewBox="0 0 14 14"><rect x="1" y="1" width="12" height="12" fill="none" stroke="#1e1e1e" stroke-width="1.6"/><path d="M3.5 7 h7" stroke="#1e1e1e" stroke-width="1.8"/></svg>
<span class="t" style="left:1674px;top:623.69px;font-size:18.2px;color:#1e1e1e;font-weight:bold;transform:scale(0.9471,1);">Connection Details</span>
<div style="left:1668px;top:648px;width:103px;height:26.5px;background:#ffffff;"></div>
<div style="left:1773.5px;top:648px;width:108.5px;height:26.5px;background:#ffffff;"></div>
<div style="left:1668px;top:647px;width:99.5px;height:28px;overflow:hidden;">
<span class="t" style="left:6px;top:5.49px;font-size:18.2px;color:#6d6d6d;transform:scale(0.9810,1);">Connection elapsed time</span>
</div>
<div style="left:1773.5px;top:647px;width:108.5px;height:28px;overflow:hidden;">
<span class="t" style="left:4.5px;top:5.49px;font-size:18.2px;color:#6d6d6d;transform:scale(0.8811,1);">00:00:00.073</span>
</div>
<div style="left:1668px;top:676.5px;width:103px;height:26.5px;background:#ffffff;"></div>
<div style="left:1773.5px;top:676.5px;width:108.5px;height:26.5px;background:#ffffff;"></div>
<div style="left:1668px;top:675.5px;width:99.5px;height:28px;overflow:hidden;">
<span class="t" style="left:6px;top:5.49px;font-size:18.2px;color:#6d6d6d;transform:scale(0.9923,1);">Connection encryption</span>
</div>
<div style="left:1773.5px;top:675.5px;width:108.5px;height:28px;overflow:hidden;">
<span class="t" style="left:4.5px;top:5.49px;font-size:18.2px;color:#6d6d6d;transform:scale(0.9988,1);">Not encrypte</span>
</div>
<div style="left:1668px;top:705px;width:103px;height:26.5px;background:#ffffff;"></div>
<div style="left:1773.5px;top:705px;width:108.5px;height:26.5px;background:#ffffff;"></div>
<div style="left:1668px;top:704px;width:99.5px;height:28px;overflow:hidden;">
<span class="t" style="left:6px;top:5.49px;font-size:18.2px;color:#6d6d6d;transform:scale(0.9924,1);">Connection finish time</span>
</div>
<div style="left:1773.5px;top:704px;width:108.5px;height:28px;overflow:hidden;">
<span class="t" style="left:4.5px;top:5.49px;font-size:18.2px;color:#6d6d6d;transform:scale(0.9258,1);">16/10/2018 8:</span>
</div>
<div style="left:1668px;top:733.5px;width:103px;height:26.5px;background:#ffffff;"></div>
<div style="left:1773.5px;top:733.5px;width:108.5px;height:26.5px;background:#ffffff;"></div>
<div style="left:1668px;top:732.5px;width:99.5px;height:28px;overflow:hidden;">
<span class="t" style="left:6px;top:5.49px;font-size:18.2px;color:#6d6d6d;transform:scale(0.9879,1);">Connection rows returned</span>
</div>
<div style="left:1773.5px;top:732.5px;width:108.5px;height:28px;overflow:hidden;">
<span class="t" style="left:4.5px;top:5.49px;font-size:18.2px;color:#6d6d6d;transform:scale(0.8163,1);">1</span>
</div>
<div style="left:1668px;top:762px;width:103px;height:26.5px;background:#ffffff;"></div>
<div style="left:1773.5px;top:762px;width:108.5px;height:26.5px;background:#ffffff;"></div>
<div style="left:1668px;top:761px;width:99.5px;height:28px;overflow:hidden;">
<span class="t" style="left:6px;top:5.49px;font-size:18.2px;color:#6d6d6d;transform:scale(0.9920,1);">Connection start time</span>
</div>
<div style="left:1773.5px;top:761px;width:108.5px;height:28px;overflow:hidden;">
<span class="t" style="left:4.5px;top:5.49px;font-size:18.2px;color:#6d6d6d;transform:scale(0.9258,1);">16/10/2018 8:</span>
</div>
<div style="left:1668px;top:790.5px;width:103px;height:26.5px;background:#ffffff;"></div>
<div style="left:1773.5px;top:790.5px;width:108.5px;height:26.5px;background:#ffffff;"></div>
<div style="left:1668px;top:789.5px;width:99.5px;height:28px;overflow:hidden;">
<span class="t" style="left:6px;top:5.49px;font-size:18.2px;color:#6d6d6d;transform:scale(0.9768,1);">Connection state</span>
</div>
<div style="left:1773.5px;top:789.5px;width:108.5px;height:28px;overflow:hidden;">
<span class="t" style="left:4.5px;top:5.49px;font-size:18.2px;color:#6d6d6d;transform:scale(0.9166,1);">Open</span>
</div>
<div style="left:1668px;top:819px;width:103px;height:26.5px;background:#ffffff;"></div>
<div style="left:1773.5px;top:819px;width:108.5px;height:26.5px;background:#ffffff;"></div>
<div style="left:1668px;top:818px;width:99.5px;height:28px;overflow:hidden;">
<span class="t" style="left:6px;top:5.49px;font-size:18.2px;color:#6d6d6d;transform:scale(0.9585,1);">Display name</span>
</div>
<div style="left:1773.5px;top:818px;width:108.5px;height:28px;overflow:hidden;">
<span class="t" style="left:4.5px;top:5.49px;font-size:18.2px;color:#6d6d6d;transform:scale(0.8902,1);">N550JKL\SQL</span>
</div>
<div style="left:1668px;top:847.5px;width:103px;height:26.5px;background:#ffffff;"></div>
<div style="left:1773.5px;top:847.5px;width:108.5px;height:26.5px;background:#ffffff;"></div>
<div style="left:1668px;top:846.5px;width:99.5px;height:28px;overflow:hidden;">
<span class="t" style="left:6px;top:5.49px;font-size:18.2px;color:#6d6d6d;transform:scale(0.9714,1);">Login name</span>
</div>
<div style="left:1773.5px;top:846.5px;width:108.5px;height:28px;overflow:hidden;">
<span class="t" style="left:4.5px;top:5.49px;font-size:18.2px;color:#6d6d6d;transform:scale(0.9433,1);">N550JKL\lpm</span>
</div>
<div style="left:1886px;top:331px;width:22px;height:548px;background:#e8e8ec;"></div>
<svg style="left:1888px;top:342px;" width="13" height="7" viewBox="0 0 13 7"><path d="M0 7 h13 l-6.5 -7z" fill="#868999"/></svg>
<svg style="left:1888px;top:863px;" width="13" height="7" viewBox="0 0 13 7"><path d="M0 0 h13 l-6.5 7z" fill="#868999"/></svg>
<div style="left:1889px;top:360px;width:12.5px;height:408px;background:#cdced4;"></div>
<div style="left:1648px;top:879px;width:260px;height:95px;background:#ffffff;"></div>
<span class="t" style="left:1655px;top:891.59px;font-size:18.2px;color:#1e1e1e;font-weight:bold;transform:scale(0.9890,1);">Name</span>
<span class="t" style="left:1655px;top:918.59px;font-size:18.2px;color:#1e1e1e;transform:scale(0.9934,1);">The name of the connection.</span>
<span class="t" style="left:7px;top:992.59px;font-size:18.2px;color:#fff;transform:scale(0.8939,1);">Ready</span>
<span class="t" style="left:1398px;top:992.59px;font-size:18.2px;color:#fff;transform:scale(0.9125,1);">Ln 1009</span>
<span class="t" style="left:1537px;top:992.59px;font-size:18.2px;color:#fff;transform:scale(0.9319,1);">Col 57</span>
<span class="t" style="left:1675px;top:992.59px;font-size:18.2px;color:#fff;transform:scale(0.9269,1);">Ch 57</span>
<span class="t" style="left:1873px;top:992.59px;font-size:18.2px;color:#fff;transform:scale(0.9232,1);">INS</span>
<div style="left:290px;top:1019px;width:200px;height:1px;background:#8c8c8c;"></div>
</div>
</body></html>
